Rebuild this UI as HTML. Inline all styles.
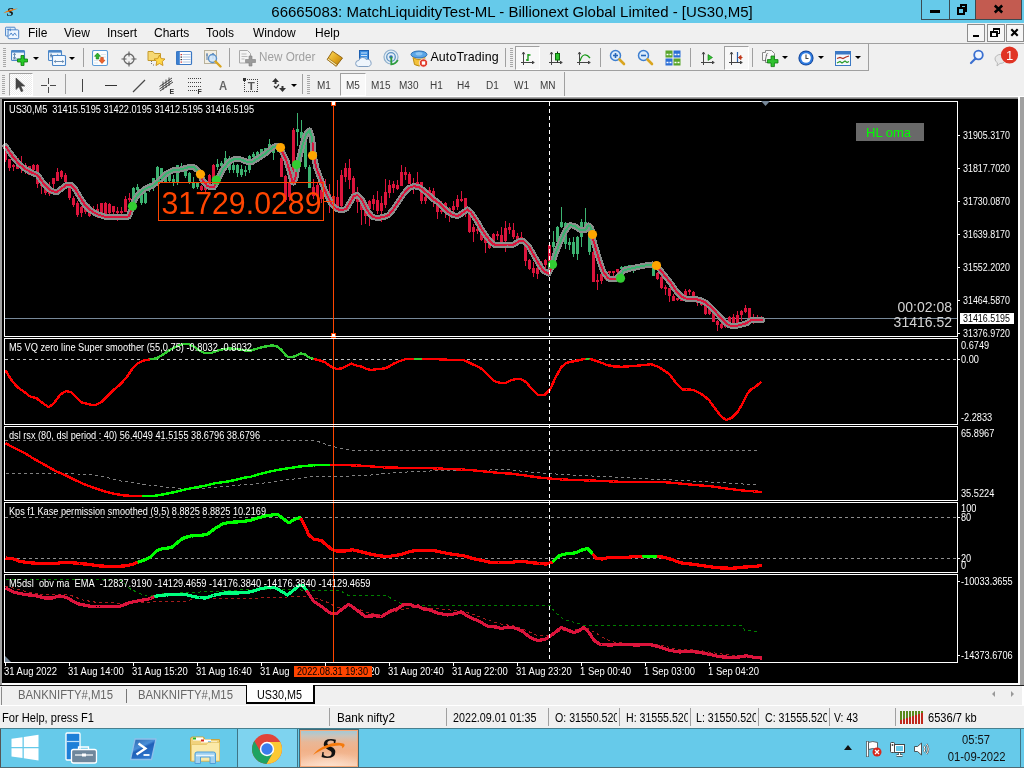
<!DOCTYPE html>
<html><head><meta charset="utf-8"><title>MT5</title><style>
html,body{margin:0;padding:0}
body{width:1024px;height:768px;overflow:hidden;position:relative;background:#f0f0f0;font-family:"Liberation Sans",sans-serif;font-size:12px;color:#000}
.abs{position:absolute}
div{box-sizing:border-box}
#title{left:0;top:0;width:1024px;height:23px;will-change:transform}
#ttext{left:0;top:2px;width:1024px;text-align:center;font-size:15px;line-height:19px;white-space:nowrap}
.wb{top:0;height:20px;border:1px solid #3a4a52;border-top:none}
#menu{left:0;top:23px;width:1024px;height:21px;border-bottom:1px solid #a0a0a0;will-change:transform}
.mi{top:3px;font-size:12px;line-height:15px;white-space:nowrap}
#tb1{left:0;top:44px;width:1024px;height:27px;will-change:transform}
#tb2{left:0;top:71px;width:1024px;height:26px;will-change:transform}
.sep{width:1px;background:#a0a0a0}
.grip{width:3px;background:repeating-linear-gradient(#a8a8a8 0,#a8a8a8 1px,transparent 1px,transparent 2px)}
.tf{top:8.500px;font-size:10px;line-height:12px;color:#3c3c3c;white-space:nowrap}
.pressed{border:1px solid #a0a0a0;border-right-color:#fff;border-bottom-color:#fff;background:#f8f8f8}
#mdi{left:2px;top:99px;width:1016px;height:585px;background:#000}
#tabs{left:0;top:685px;width:1024px;height:20px;border-top:1px solid #1c1c1c;will-change:transform}
.tab{top:0;font-size:12px;line-height:18px;color:#666;white-space:nowrap}
#status{left:0;top:706px;width:1024px;height:22px;will-change:transform}
.st{top:5px;font-size:12px;line-height:14px;white-space:nowrap}
.ssep{top:2px;width:1px;height:18px;background:#a0a0a0}
#task{left:0;top:728px;width:1024px;height:40px;border-top:1px solid #47808f;will-change:transform}
.tray{color:#111;font-size:12px;line-height:14px;white-space:nowrap;text-align:center}
</style></head><body>
<div class="abs" style="left:0;top:0;width:1024px;height:23px;background:#66caea"></div>
<div class="abs" style="left:0;top:728px;width:1024px;height:40px;background:#66caea"></div>
<div id="title" class="abs">
<div id="ttext" class="abs">66665083: MatchLiquidityTest-ML - Billionext Global Limited - [US30,M5]</div>
<svg class="abs" style="left:3px;top:5px" width="16" height="13" viewBox="0 0 16 13" ><text x="7.200" y="11" font-family="Liberation Serif, serif" font-style="italic" font-weight="bold" font-size="12.500" text-anchor="middle" fill="#111">S</text><path d="M0.300 8.200 C3.500 5.500 9 3.800 15 3.500 C10 5.800 5 7.200 0.300 8.200Z" fill="#f07810"/></svg>
<div class="abs wb" style="left:921px;width:29px"></div>
<div class="abs wb" style="left:949px;width:27px"></div>
<div class="abs wb" style="left:975px;width:47px;background:#c35b50"></div>
<div class="abs" style="left:930px;top:10px;width:10px;height:3px;background:#000"></div><svg class="abs" style="left:956px;top:3px" width="12" height="12" viewBox="0 0 12 12" shape-rendering="crispEdges"><path d="M4.500 4V2H10V8H8" fill="none" stroke="#000" stroke-width="2"/><rect x="2" y="5" width="6" height="5.500" fill="none" stroke="#000" stroke-width="2"/></svg><svg class="abs" style="left:993px;top:4px" width="11" height="10" viewBox="0 0 11 10" ><path d="M1.800 1.500L9.200 8.500M9.200 1.500L1.800 8.500" stroke="#000" stroke-width="2.500"/></svg>
</div>
<div id="menu" class="abs">
<div class="abs mi" style="left:28px">File</div>
<div class="abs mi" style="left:64px">View</div>
<div class="abs mi" style="left:107px">Insert</div>
<div class="abs mi" style="left:154px">Charts</div>
<div class="abs mi" style="left:206px">Tools</div>
<div class="abs mi" style="left:253px">Window</div>
<div class="abs mi" style="left:315px">Help</div>
<svg class="abs" style="left:5px;top:2px" width="15" height="15" viewBox="0 0 17 17" ><rect x="0.5" y="2.5" width="11" height="10" rx="1" fill="#dfeefb" stroke="#3a78c3"/><rect x="3.5" y="5.5" width="12" height="10" rx="1" fill="#eef6ff" stroke="#3a78c3"/><path d="M5 12l2-3 2 3 2-3 2 3" fill="none" stroke="#3a78c3" stroke-width="1"/><path d="M2 5h3M6 4v3" stroke="#3a78c3" stroke-width="1"/></svg>
<div class="abs" style="left:967px;top:0.500px;width:18px;height:18.500px;border:1px solid #8c8c8c;background:#f6f6f6"></div><div class="abs" style="left:986.5px;top:0.500px;width:18px;height:18.500px;border:1px solid #8c8c8c;background:#f6f6f6"></div><div class="abs" style="left:1005.5px;top:0.500px;width:18px;height:18.500px;border:1px solid #8c8c8c;background:#f6f6f6"></div><div class="abs" style="left:973px;top:12px;width:6px;height:2px;background:#000"></div><svg class="abs" style="left:990px;top:5px" width="11" height="10" viewBox="0 0 11 10" shape-rendering="crispEdges"><path d="M3.500 3V1H9.500V5.500H7.500" fill="none" stroke="#000" stroke-width="1.600"/><rect x="1" y="4" width="6" height="4.500" fill="none" stroke="#000" stroke-width="1.600"/></svg><svg class="abs" style="left:1010px;top:5px" width="9" height="9" viewBox="0 0 9 9" ><path d="M1.300 1.300L7.700 7.700M7.700 1.300L1.300 7.700" stroke="#000" stroke-width="2.100"/></svg>
</div>
<div id="tb1" class="abs">
<div class="abs grip" style="left:3px;top:4px;height:19px"></div><svg class="abs" style="left:10.5px;top:6px" width="18" height="17" viewBox="0 0 18 17" ><rect x="0.500" y="0.500" width="13" height="10" rx="1" fill="#eef5fc" stroke="#4a86c8" stroke-width="1.100"/><rect x="1" y="1" width="12" height="1.600" fill="#4a86c8"/><path d="M3.500 3.500v5M2.300 4.800l1.200-1.500 1.200 1.500M2.300 7.200l1.200 1.500 1.200-1.500M2 9h9" stroke="#5a7fa8" stroke-width="0.900" fill="none"/><path d="M9 6.500h3v-0h0v3.500h3.500v3h-3.500v3.500h-3v-3.500h-3.500v-3h3.500z" fill="#27c927" stroke="#0b7a0b" stroke-width="0.800" transform="translate(1,-1)"/></svg><div class="abs" style="left:33px;top:12.5px;width:0;height:0;border:3px solid transparent;border-top:3px solid #000;border-bottom:none"></div><svg class="abs" style="left:47.5px;top:6px" width="19" height="17" viewBox="0 0 19 17" ><rect x="0.500" y="0.500" width="13" height="10" rx="1" fill="#eef5fc" stroke="#4a86c8" stroke-width="1.100"/><rect x="1" y="1" width="12" height="1.600" fill="#4a86c8"/><path d="M2.500 5.500h8M3.700 4.300l-1.400 1.200 1.400 1.200M9.300 4.300l1.400 1.200-1.400 1.200M3 3.500v4" stroke="#5a7fa8" stroke-width="0.900" fill="none"/><rect x="4.500" y="5.500" width="13" height="10" rx="1" fill="#f4f9ff" stroke="#4a86c8" stroke-width="1.100"/><path d="M6.500 11.500h9M7.700 10.300l-1.400 1.200 1.400 1.200M14.300 10.300l1.400 1.200-1.400 1.200" stroke="#5a7fa8" stroke-width="0.900" fill="none"/></svg><div class="abs" style="left:69px;top:12.5px;width:0;height:0;border:3px solid transparent;border-top:3px solid #000;border-bottom:none"></div><div class="abs sep" style="left:83px;top:4px;height:19px"></div><svg class="abs" style="left:92px;top:6px" width="17" height="17" viewBox="0 0 17 17" ><rect x="0.500" y="0.500" width="15" height="15" rx="1.500" fill="#fdfefe" stroke="#5b9bd8" stroke-width="1.100"/><path d="M9 4.500h5M9 7h5M2 10.500h4M2 13h4" stroke="#dde6ee" stroke-width="1"/><path d="M5.500 3l3 3.300h-1.700v2.700h-2.600v-2.700h-1.700z" fill="#2fb52f" stroke="#0b7a0b" stroke-width="0.600"/><path d="M10 13.500l-3-3.300h1.700v-2.700h2.600v2.700h1.700z" fill="#f0642a" stroke="#b8380c" stroke-width="0.600"/></svg><svg class="abs" style="left:120.5px;top:6.5px" width="16" height="16" viewBox="0 0 16 16" ><circle cx="8" cy="8" r="5" fill="none" stroke="#6a6a6a" stroke-width="1.300"/><path d="M8 0.500v5M8 10.500v5M0.500 8h5M10.500 8h5" stroke="#5a5a5a" stroke-width="1.100"/></svg><svg class="abs" style="left:147px;top:4px" width="19" height="18" viewBox="0 0 19 18" ><path d="M1 3.5h5l1.5 2h6v7H1z" fill="#f6d873" stroke="#c49a2c"/><path d="M4.5 13v4M6 17h2" stroke="#777" stroke-width="1" stroke-dasharray="1,1"/><path d="M12.5 7l1.7 3.6 3.8.4-2.8 2.6.8 3.9-3.5-2-3.5 2 .8-3.9L7 11l3.8-.4z" fill="#ffd84a" stroke="#c8901a" stroke-width="0.9"/></svg><svg class="abs" style="left:176px;top:6px" width="17" height="16" viewBox="0 0 17 16" ><rect x="0.500" y="1.500" width="15" height="13" rx="1" fill="#fff" stroke="#3b78c4" stroke-width="1.200"/><rect x="1" y="2" width="2.800" height="12" fill="#3b7fd0"/><path d="M6.500 4.500h8M6.500 7h8M6.500 9.500h8M6.500 12h8" stroke="#9db8dc" stroke-width="0.800"/><rect x="4.600" y="4" width="1.300" height="1.200" fill="#d02020"/><rect x="4.600" y="6.500" width="1.300" height="1.200" fill="#222"/><rect x="4.600" y="9" width="1.300" height="1.200" fill="#222"/><rect x="4.600" y="11.500" width="1.300" height="1.200" fill="#d02020"/></svg><svg class="abs" style="left:204px;top:6px" width="18" height="18" viewBox="0 0 18 18" ><rect x="0.5" y="0.5" width="12" height="13" fill="#f3efe4" stroke="#b9b29b"/><path d="M3 3v7M2 5h2M9 3v6M8 4h2" stroke="#5a7fa8" stroke-width="1"/><circle cx="8.5" cy="8.5" r="4" fill="#cfe6fb" fill-opacity="0.85" stroke="#5b90c8" stroke-width="1.4"/><path d="M11.5 11.5l5 5" stroke="#d9a520" stroke-width="2.4" stroke-linecap="round"/></svg><div class="abs sep" style="left:229px;top:4px;height:19px"></div><svg class="abs" style="left:239px;top:6px" width="17" height="17" viewBox="0 0 17 17" ><path d="M0.5 0.5h8l3 3v9.5h-11z" fill="#f4f4f4" stroke="#aaa"/><path d="M2.5 4h5M2.5 6.5h6M2.5 9h3" stroke="#bbb"/><path d="M10 7h3v3.5h3.5v3h-3.5v3.5h-3v-3.5h-3.5v-3h3.5z" fill="#9b9b9b" stroke="#808080" stroke-width="0.6" transform="translate(0,-1)"/></svg><div class="abs" style="left:259px;top:6px;font-size:12px;line-height:15px;color:#a0a0a0;white-space:nowrap;transform-origin:0 0;transform:scaleX(0.974)">New Order</div><svg class="abs" style="left:326px;top:6px" width="18" height="18" viewBox="0 0 18 18" ><defs><linearGradient id="tg" x1="0" y1="0" x2="1" y2="1"><stop offset="0" stop-color="#ffe060"/><stop offset="0.55" stop-color="#e0a51e"/><stop offset="1" stop-color="#a87408"/></linearGradient></defs><path d="M1.200 9.500L6.500 1.200l10 6.800-6.300 8.200z" fill="url(#tg)" stroke="#8a5a08" stroke-width="0.900"/><path d="M1.200 9.500l9 6.700 1-1.500L2.500 8.300z" fill="#f7e7a8" stroke="#8a5a08" stroke-width="0.600"/></svg><svg class="abs" style="left:355px;top:6px" width="17" height="18" viewBox="0 0 17 18" ><rect x="4.5" y="0.5" width="9" height="11" fill="#3d8ee0" stroke="#1c5fb0"/><path d="M6 3h6M6 5.5h6M6 8h6" stroke="#cfe5fb" stroke-width="1"/><path d="M3.5 16.5a3 3 0 0 1 .3-6 4 4 0 0 1 7.4-1 3.5 3.5 0 0 1 2.3 7z" fill="#eef5fc" stroke="#7f9dc0" stroke-width="1"/></svg><svg class="abs" style="left:383px;top:5px" width="17" height="17" viewBox="0 0 17 17" ><circle cx="8" cy="8" r="7" fill="#e4eef6" stroke="#8fb0cc" stroke-width="1.2"/><circle cx="8" cy="8" r="4.3" fill="none" stroke="#5f93c2" stroke-width="1.3"/><circle cx="8" cy="8" r="1.8" fill="#2f6fb0"/><path d="M8.300 8v7.300A7.300 7.300 0 0 0 14.800 11" fill="none" stroke="#2e9e3a" stroke-width="1.800"/></svg><svg class="abs" style="left:410px;top:6px" width="19" height="18" viewBox="0 0 19 18" ><ellipse cx="9" cy="4.5" rx="8" ry="3.5" fill="#5aa5e6" stroke="#2a6fb5"/><path d="M3 7.5q6 4 12 0l-1.5 7q-4.5 3-9 0z" fill="#f3c23a" stroke="#b98a14"/><ellipse cx="9" cy="3.8" rx="3.5" ry="1.8" fill="#8fc6f2"/><circle cx="13.5" cy="13" r="4.2" fill="#e03a2a" stroke="#fff" stroke-width="0.8"/><rect x="11.8" y="11.3" width="3.4" height="3.4" fill="#fff"/></svg><div class="abs" style="left:430.5px;top:6px;font-size:12.4px;line-height:15px;white-space:nowrap;letter-spacing:0.1px">AutoTrading</div><div class="abs sep" style="left:505px;top:4px;height:19px"></div><div class="abs grip" style="left:510px;top:4px;height:19px"></div><div class="abs pressed" style="left:515px;top:2px;width:25px;height:24px"></div><svg class="abs" style="left:520px;top:7.2px" width="16" height="16" viewBox="0 0 16 16" ><path d="M3.500 1v13M1 11.500h13" stroke="#444" stroke-width="1" fill="none"/><path d="M2.200 3.300l1.300-2.300 1.300 2.300M12 10.200l2.300 1.300-2.300 1.300" fill="none" stroke="#444" stroke-width="1"/><path d="M8 3v7M6 9h2M8 4h2.5" stroke="#1a9a1a" stroke-width="1.4" fill="none"/></svg><svg class="abs" style="left:548px;top:7.2px" width="16" height="16" viewBox="0 0 16 16" ><path d="M3.500 1v13M1 11.500h13" stroke="#444" stroke-width="1" fill="none"/><path d="M2.200 3.300l1.300-2.300 1.300 2.300M12 10.200l2.300 1.300-2.300 1.300" fill="none" stroke="#444" stroke-width="1"/><path d="M9.5 0.5v11" stroke="#222"/><rect x="7.5" y="2.5" width="4" height="6.5" fill="#2fc12f" stroke="#0b6d0b"/></svg><svg class="abs" style="left:576px;top:7.2px" width="16" height="16" viewBox="0 0 16 16" ><path d="M3.500 1v13M1 11.500h13" stroke="#444" stroke-width="1" fill="none"/><path d="M2.200 3.300l1.300-2.300 1.300 2.300M12 10.200l2.300 1.300-2.300 1.300" fill="none" stroke="#444" stroke-width="1"/><path d="M4 10c2-7 6-8 10-3" fill="none" stroke="#1a9a1a" stroke-width="1.3"/></svg><div class="abs sep" style="left:600px;top:4px;height:19px"></div><svg class="abs" style="left:609px;top:5px" width="17" height="17" viewBox="0 0 17 17" ><circle cx="6.5" cy="6.5" r="5" fill="#dcecfb" stroke="#3e7fd0" stroke-width="1.5"/><path d="M10.5 10.5l4.5 4.5" stroke="#d9a520" stroke-width="2.6" stroke-linecap="round"/><path d="M4 6.5h5" stroke="#2566b8" stroke-width="1.6"/><path d="M6.5 4v5" stroke="#2566b8" stroke-width="1.6"/></svg><svg class="abs" style="left:637px;top:5px" width="17" height="17" viewBox="0 0 17 17" ><circle cx="6.5" cy="6.5" r="5" fill="#dcecfb" stroke="#3e7fd0" stroke-width="1.5"/><path d="M10.5 10.5l4.5 4.5" stroke="#d9a520" stroke-width="2.6" stroke-linecap="round"/><path d="M4 6.5h5" stroke="#2566b8" stroke-width="1.6"/></svg><svg class="abs" style="left:665px;top:6px" width="17" height="16" viewBox="0 0 17 16" ><rect x="0.5" y="0.5" width="7" height="7" fill="#59a52c"/><rect x="8.5" y="0.5" width="7" height="7" fill="#2d6fd6"/><rect x="0.5" y="8.5" width="7" height="7" fill="#2d6fd6"/><rect x="8.5" y="8.5" width="7" height="7" fill="#59a52c"/><path d="M1.5 4.5h5M9.5 4.5h5M1.5 12.5h5M9.5 12.5h5" stroke="#fff" stroke-width="1.6" stroke-dasharray="2,1"/></svg><div class="abs sep" style="left:690px;top:4px;height:19px"></div><svg class="abs" style="left:700px;top:7.2px" width="16" height="16" viewBox="0 0 16 16" ><path d="M3.500 1v13M1 11.500h13" stroke="#444" stroke-width="1" fill="none"/><path d="M2.200 3.300l1.300-2.300 1.300 2.300M12 10.200l2.300 1.300-2.300 1.300" fill="none" stroke="#444" stroke-width="1"/><path d="M8 3.5l4.5 3-4.5 3z" fill="#2fc12f" stroke="#0b7a0b" stroke-width="0.6"/></svg><div class="abs pressed" style="left:724px;top:2px;width:25px;height:24px"></div><svg class="abs" style="left:728px;top:7.2px" width="16" height="16" viewBox="0 0 16 16" ><path d="M3.500 1v13M1 11.500h13" stroke="#444" stroke-width="1" fill="none"/><path d="M2.200 3.300l1.300-2.300 1.300 2.300M12 10.200l2.300 1.300-2.300 1.300" fill="none" stroke="#444" stroke-width="1"/><path d="M9.5 1v10" stroke="#2b5fa8" stroke-width="1.2"/><path d="M14.5 6.5h-4m0 0l2.5-2v4z" stroke="#c0391b" fill="#c0391b" stroke-width="1"/></svg><div class="abs sep" style="left:752px;top:4px;height:19px"></div><svg class="abs" style="left:762px;top:6px" width="18" height="18" viewBox="0 0 18 18" ><path d="M0.5 2.5h3v-2h6l3 3v9h-9v-2h-3z" fill="#f7f7f7" stroke="#888"/><text x="3" y="9" font-size="8" font-style="italic" font-family="Liberation Serif" fill="#333">f</text><path d="M9 6h3.4v3.6H16v3.4h-3.6v3.6H9v-3.6H5.4V9.6H9z" fill="#2fc12f" stroke="#0b7a0b" stroke-width="0.8"/></svg><div class="abs" style="left:782px;top:12px;width:0;height:0;border:3px solid transparent;border-top:3px solid #000;border-bottom:none"></div><svg class="abs" style="left:798px;top:6px" width="17" height="17" viewBox="0 0 17 17" ><circle cx="8" cy="8" r="7.6" fill="#15479a"/><circle cx="8" cy="8" r="6.600" fill="#2f7be0"/><circle cx="8" cy="8" r="4.800" fill="#fff"/><path d="M8 4.500v4h2.500" fill="none" stroke="#444" stroke-width="1.1"/></svg><div class="abs" style="left:818px;top:12px;width:0;height:0;border:3px solid transparent;border-top:3px solid #000;border-bottom:none"></div><svg class="abs" style="left:835px;top:6.5px" width="17" height="16" viewBox="0 0 17 16" ><rect x="0.5" y="0.5" width="15" height="14" fill="#f5f9fd" stroke="#3b78c4"/><rect x="1" y="1" width="14" height="2.5" fill="#3b78c4"/><path d="M2 7.5l3-1 3 1 3-1.5 3-1" fill="none" stroke="#b03020" stroke-width="1.2"/><path d="M2 12l3-1.5 2 1.5 3-2 2 1.5 2-1" fill="none" stroke="#2a9a2a" stroke-width="1.2"/></svg><div class="abs" style="left:855px;top:12px;width:0;height:0;border:3px solid transparent;border-top:3px solid #000;border-bottom:none"></div><div class="abs" style="left:0;top:26px;width:869px;height:1px;background:#a0a0a0"></div><div class="abs" style="left:868px;top:0;width:1px;height:27px;background:#a0a0a0"></div><svg class="abs" style="left:969px;top:5px" width="16" height="16" viewBox="0 0 16 16" ><circle cx="9.5" cy="6" r="4.3" fill="#f0f6ff" stroke="#3a6fd0" stroke-width="1.8"/><path d="M6.5 9.5L2 14" stroke="#3a6fd0" stroke-width="2.2" stroke-linecap="round"/></svg><svg class="abs" style="left:993px;top:1px" width="28" height="24" viewBox="0 0 28 24" ><path d="M2 14a5.5 4.5 0 1 1 5 4.4L4 21l.5-3.2A4.5 4.5 0 0 1 2 14z" fill="#e8e8e8" stroke="#b8b8b8"/><circle cx="16.5" cy="10" r="8.6" fill="#e03424"/><text x="16.5" y="14.5" font-size="13" text-anchor="middle" fill="#fff" font-family="Liberation Sans">1</text></svg>
</div>
<div id="tb2" class="abs">
<div class="abs grip" style="left:2px;top:4px;height:19px"></div><div class="abs pressed" style="left:9px;top:2px;width:24px;height:23px;background:repeating-conic-gradient(#fff 0 25%,#ececec 0 50%) 0 0/2px 2px"></div><svg class="abs" style="left:15px;top:6px" width="10" height="16" viewBox="0 0 10 16" ><path d="M1 1v11.5l3-2.8 2.2 5 1.8-.8-2.2-4.8h4z" fill="#444" stroke="#444" stroke-width="0.6"/></svg><svg class="abs" style="left:41px;top:7px" width="15" height="15" viewBox="0 0 15 15" ><path d="M7.5 0v15M0 7.5h15" stroke="#4a4a4a" stroke-width="1" shape-rendering="crispEdges"/><rect x="6" y="6" width="3" height="3" fill="#f0f0f0"/></svg><div class="abs sep" style="left:65px;top:3px;height:20px"></div><div class="abs" style="left:82px;top:8px;width:1px;height:13px;background:#444"></div><div class="abs" style="left:105px;top:14px;width:12px;height:1px;background:#333"></div><svg class="abs" style="left:132px;top:7.5px" width="14" height="14" viewBox="0 0 14 14" ><path d="M1 13L13 1" stroke="#4a4a4a" stroke-width="1.200"/></svg><svg class="abs" style="left:158px;top:5px" width="18" height="18" viewBox="0 0 18 18" ><path d="M1.500 10.500L14 2M2 15L15 6M1.500 13L14 4.500" stroke="#444" stroke-width="1"/><path d="M5 5.500v8.500M8 3.500v8.500M11 1.500v8.500" stroke="#444" stroke-width="0.900"/><text x="11.500" y="17.500" font-size="7" font-weight="bold" fill="#333" font-family="Liberation Sans">E</text></svg><svg class="abs" style="left:187px;top:5px" width="18" height="18" viewBox="0 0 18 18" ><path d="M1 2.5h13M1 6.5h13M1 10.5h13M1 14.5h9" stroke="#444" stroke-width="1" stroke-dasharray="1,1" shape-rendering="crispEdges"/><text x="10.500" y="17.500" font-size="7" font-weight="bold" fill="#333" font-family="Liberation Sans">F</text></svg><div class="abs" style="left:218.500px;top:8.500px;font-size:12.500px;line-height:13px;color:#666;font-weight:bold;transform-origin:0 0;transform:scaleX(0.9)">A</div><svg class="abs" style="left:243px;top:6px" width="16" height="16" viewBox="0 0 16 16" ><rect x="1.5" y="2.5" width="13" height="12" fill="none" stroke="#444" stroke-dasharray="1,1" shape-rendering="crispEdges"/><rect x="0" y="1" width="3" height="3" fill="#333"/><text x="8.300" y="12.800" font-size="11.500" font-weight="bold" text-anchor="middle" fill="#555" font-family="Liberation Sans">T</text></svg><svg class="abs" style="left:271px;top:6px" width="16" height="16" viewBox="0 0 16 16" ><path d="M4.5 1l3.5 4h-2.5v2h-2v-2h-2.5z" fill="#333"/><path d="M11.5 15l-3.500-4h2.5v-2h2v2h2.5z" fill="#333"/><path d="M3 9l2 2 3-3.500" stroke="#333" fill="none" stroke-width="1.2"/></svg><div class="abs" style="left:291px;top:13px;width:0;height:0;border:3px solid transparent;border-top:3px solid #000;border-bottom:none"></div><div class="abs sep" style="left:302px;top:3px;height:20px"></div><div class="abs grip" style="left:307px;top:4px;height:19px"></div><div class="abs pressed" style="left:340px;top:2px;width:26px;height:23px"></div><div class="abs tf" style="left:317px">M1</div><div class="abs tf" style="left:346px">M5</div><div class="abs tf" style="left:371px">M15</div><div class="abs tf" style="left:399px">M30</div><div class="abs tf" style="left:430px">H1</div><div class="abs tf" style="left:457px">H4</div><div class="abs tf" style="left:486px">D1</div><div class="abs tf" style="left:514px">W1</div><div class="abs tf" style="left:540px">MN</div><div class="abs" style="left:564px;top:1px;width:1px;height:25px;background:#a0a0a0"></div>
</div>
<div class="abs" style="left:0;top:96px;width:1024px;height:1px;background:#fff"></div><div class="abs" style="left:0;top:97px;width:1024px;height:1px;background:#a8a8a8"></div><div class="abs" style="left:0;top:98px;width:1024px;height:1px;background:#7c7c7c"></div>
<div class="abs" style="left:0;top:99px;width:2px;height:586px;background:#a0a0a0"></div>
<div class="abs" style="left:1018px;top:97px;width:2px;height:588px;background:#fff"></div>
<div class="abs" style="left:1020px;top:97px;width:4px;height:588px;background:#a0a0a0"></div>
<div id="mdi" class="abs"></div>
<div class="abs" style="left:2px;top:683px;width:1018px;height:2px;background:#fff"></div>
<svg class="abs" width="1024" height="768" viewBox="0 0 1024 768" shape-rendering="crispEdges" font-family="Liberation Sans, sans-serif" style="left:0;top:0;will-change:transform">
<rect x="5" y="318" width="952" height="1" fill="#778899" />
<rect x="5" y="150" width="1" height="12" fill="#dc143c" />
<rect x="4" y="152" width="3" height="8" fill="#dc143c" />
<rect x="9" y="159" width="1" height="12" fill="#dc143c" />
<rect x="8" y="159" width="3" height="9" fill="#dc143c" />
<rect x="13" y="164" width="1" height="7" fill="#dc143c" />
<rect x="12" y="165" width="3" height="2" fill="#dc143c" />
<rect x="17" y="158" width="1" height="11" fill="#dc143c" />
<rect x="16" y="158" width="3" height="11" fill="#dc143c" />
<rect x="21" y="156" width="1" height="17" fill="#dc143c" />
<rect x="20" y="163" width="3" height="4" fill="#dc143c" />
<rect x="25" y="163" width="1" height="11" fill="#dc143c" />
<rect x="24" y="165" width="3" height="3" fill="#dc143c" />
<rect x="29" y="166" width="1" height="9" fill="#dc143c" />
<rect x="28" y="166" width="3" height="9" fill="#dc143c" />
<rect x="33" y="164" width="1" height="8" fill="#dc143c" />
<rect x="32" y="165" width="3" height="5" fill="#dc143c" />
<rect x="37" y="164" width="1" height="24" fill="#dc143c" />
<rect x="36" y="165" width="3" height="19" fill="#dc143c" />
<rect x="41" y="183" width="1" height="11" fill="#dc143c" />
<rect x="40" y="183" width="3" height="3" fill="#dc143c" />
<rect x="45" y="185" width="1" height="10" fill="#dc143c" />
<rect x="44" y="186" width="3" height="7" fill="#dc143c" />
<rect x="49" y="182" width="1" height="14" fill="#dc143c" />
<rect x="48" y="190" width="3" height="4" fill="#dc143c" />
<rect x="53" y="178" width="1" height="10" fill="#dc143c" />
<rect x="52" y="178" width="3" height="6" fill="#dc143c" />
<rect x="57" y="168" width="1" height="13" fill="#dc143c" />
<rect x="56" y="172" width="3" height="9" fill="#dc143c" />
<rect x="61" y="170" width="1" height="9" fill="#dc143c" />
<rect x="60" y="171" width="3" height="6" fill="#dc143c" />
<rect x="65" y="173" width="1" height="10" fill="#dc143c" />
<rect x="64" y="175" width="3" height="7" fill="#dc143c" />
<rect x="69" y="186" width="1" height="14" fill="#dc143c" />
<rect x="68" y="187" width="3" height="11" fill="#dc143c" />
<rect x="73" y="196" width="1" height="11" fill="#dc143c" />
<rect x="72" y="198" width="3" height="7" fill="#dc143c" />
<rect x="77" y="201" width="1" height="16" fill="#dc143c" />
<rect x="76" y="203" width="3" height="12" fill="#dc143c" />
<rect x="81" y="206" width="1" height="11" fill="#dc143c" />
<rect x="80" y="207" width="3" height="6" fill="#dc143c" />
<rect x="85" y="208" width="1" height="6" fill="#dc143c" />
<rect x="84" y="209" width="3" height="3" fill="#dc143c" />
<rect x="89" y="204" width="1" height="13" fill="#dc143c" />
<rect x="88" y="211" width="3" height="5" fill="#dc143c" />
<rect x="93" y="206" width="1" height="6" fill="#dc143c" />
<rect x="92" y="209" width="3" height="2" fill="#dc143c" />
<rect x="97" y="204" width="1" height="14" fill="#dc143c" />
<rect x="96" y="209" width="3" height="3" fill="#dc143c" />
<rect x="101" y="203" width="1" height="11" fill="#dc143c" />
<rect x="100" y="203" width="3" height="10" fill="#dc143c" />
<rect x="105" y="202" width="1" height="12" fill="#dc143c" />
<rect x="104" y="203" width="3" height="11" fill="#dc143c" />
<rect x="109" y="203" width="1" height="11" fill="#dc143c" />
<rect x="108" y="204" width="3" height="9" fill="#dc143c" />
<rect x="113" y="206" width="1" height="8" fill="#dc143c" />
<rect x="112" y="206" width="3" height="6" fill="#dc143c" />
<rect x="117" y="207" width="1" height="14" fill="#dc143c" />
<rect x="116" y="211" width="3" height="2" fill="#dc143c" />
<rect x="121" y="207" width="1" height="7" fill="#dc143c" />
<rect x="120" y="211" width="3" height="2" fill="#dc143c" />
<rect x="125" y="196" width="1" height="16" fill="#dc143c" />
<rect x="124" y="199" width="3" height="13" fill="#dc143c" />
<rect x="129" y="193" width="1" height="9" fill="#dc143c" />
<rect x="128" y="198" width="3" height="2" fill="#dc143c" />
<rect x="133" y="187" width="1" height="12" fill="#3cb371" />
<rect x="132" y="188" width="3" height="10" fill="#3cb371" />
<rect x="137" y="184" width="1" height="9" fill="#3cb371" />
<rect x="136" y="187" width="3" height="3" fill="#3cb371" />
<rect x="141" y="191" width="1" height="14" fill="#3cb371" />
<rect x="140" y="192" width="3" height="11" fill="#3cb371" />
<rect x="145" y="186" width="1" height="18" fill="#3cb371" />
<rect x="144" y="193" width="3" height="10" fill="#3cb371" />
<rect x="149" y="183" width="1" height="9" fill="#3cb371" />
<rect x="148" y="185" width="3" height="4" fill="#3cb371" />
<rect x="153" y="178" width="1" height="13" fill="#3cb371" />
<rect x="152" y="178" width="3" height="7" fill="#3cb371" />
<rect x="157" y="166" width="1" height="13" fill="#3cb371" />
<rect x="156" y="167" width="3" height="12" fill="#3cb371" />
<rect x="161" y="168" width="1" height="11" fill="#3cb371" />
<rect x="160" y="168" width="3" height="10" fill="#3cb371" />
<rect x="165" y="171" width="1" height="12" fill="#3cb371" />
<rect x="164" y="172" width="3" height="10" fill="#3cb371" />
<rect x="169" y="173" width="1" height="10" fill="#3cb371" />
<rect x="168" y="174" width="3" height="7" fill="#3cb371" />
<rect x="173" y="175" width="1" height="11" fill="#3cb371" />
<rect x="172" y="179" width="3" height="3" fill="#3cb371" />
<rect x="177" y="165" width="1" height="20" fill="#3cb371" />
<rect x="176" y="165" width="3" height="17" fill="#3cb371" />
<rect x="181" y="163" width="1" height="5" fill="#3cb371" />
<rect x="180" y="166" width="3" height="2" fill="#3cb371" />
<rect x="185" y="170" width="1" height="8" fill="#3cb371" />
<rect x="184" y="171" width="3" height="5" fill="#3cb371" />
<rect x="189" y="172" width="1" height="12" fill="#3cb371" />
<rect x="188" y="173" width="3" height="9" fill="#3cb371" />
<rect x="193" y="177" width="1" height="12" fill="#3cb371" />
<rect x="192" y="183" width="3" height="5" fill="#3cb371" />
<rect x="197" y="182" width="1" height="7" fill="#3cb371" />
<rect x="196" y="183" width="3" height="4" fill="#3cb371" />
<rect x="201" y="185" width="1" height="6" fill="#dc143c" />
<rect x="200" y="186" width="3" height="4" fill="#dc143c" />
<rect x="205" y="181" width="1" height="11" fill="#dc143c" />
<rect x="204" y="183" width="3" height="7" fill="#dc143c" />
<rect x="209" y="174" width="1" height="12" fill="#dc143c" />
<rect x="208" y="175" width="3" height="10" fill="#dc143c" />
<rect x="213" y="164" width="1" height="15" fill="#dc143c" />
<rect x="212" y="165" width="3" height="13" fill="#dc143c" />
<rect x="217" y="159" width="1" height="11" fill="#3cb371" />
<rect x="216" y="164" width="3" height="3" fill="#3cb371" />
<rect x="221" y="161" width="1" height="7" fill="#3cb371" />
<rect x="220" y="163" width="3" height="3" fill="#3cb371" />
<rect x="225" y="151" width="1" height="12" fill="#3cb371" />
<rect x="224" y="158" width="3" height="5" fill="#3cb371" />
<rect x="229" y="156" width="1" height="17" fill="#3cb371" />
<rect x="228" y="158" width="3" height="12" fill="#3cb371" />
<rect x="233" y="162" width="1" height="11" fill="#3cb371" />
<rect x="232" y="165" width="3" height="5" fill="#3cb371" />
<rect x="237" y="164" width="1" height="13" fill="#3cb371" />
<rect x="236" y="165" width="3" height="8" fill="#3cb371" />
<rect x="241" y="165" width="1" height="12" fill="#3cb371" />
<rect x="240" y="169" width="3" height="6" fill="#3cb371" />
<rect x="245" y="166" width="1" height="10" fill="#3cb371" />
<rect x="244" y="170" width="3" height="2" fill="#3cb371" />
<rect x="249" y="155" width="1" height="18" fill="#3cb371" />
<rect x="248" y="156" width="3" height="14" fill="#3cb371" />
<rect x="253" y="152" width="1" height="6" fill="#3cb371" />
<rect x="252" y="154" width="3" height="3" fill="#3cb371" />
<rect x="257" y="151" width="1" height="6" fill="#3cb371" />
<rect x="256" y="152" width="3" height="4" fill="#3cb371" />
<rect x="261" y="149" width="1" height="5" fill="#3cb371" />
<rect x="260" y="149" width="3" height="4" fill="#3cb371" />
<rect x="265" y="148" width="1" height="3" fill="#3cb371" />
<rect x="264" y="148" width="3" height="2" fill="#3cb371" />
<rect x="269" y="139" width="1" height="8" fill="#3cb371" />
<rect x="268" y="144" width="3" height="3" fill="#3cb371" />
<rect x="273" y="147" width="1" height="13" fill="#3cb371" />
<rect x="272" y="147" width="3" height="6" fill="#3cb371" />
<rect x="277" y="145" width="1" height="7" fill="#3cb371" />
<rect x="276" y="146" width="3" height="4" fill="#3cb371" />
<rect x="281" y="157" width="1" height="20" fill="#dc143c" />
<rect x="280" y="158" width="3" height="19" fill="#dc143c" />
<rect x="285" y="175" width="1" height="27" fill="#dc143c" />
<rect x="284" y="176" width="3" height="24" fill="#dc143c" />
<rect x="289" y="180" width="1" height="21" fill="#dc143c" />
<rect x="288" y="183" width="3" height="14" fill="#dc143c" />
<rect x="293" y="128" width="1" height="50" fill="#dc143c" />
<rect x="292" y="130" width="3" height="45" fill="#dc143c" />
<rect x="297" y="113" width="1" height="33" fill="#3cb371" />
<rect x="296" y="129" width="3" height="3" fill="#3cb371" />
<rect x="301" y="120" width="1" height="20" fill="#3cb371" />
<rect x="300" y="132" width="3" height="6" fill="#3cb371" />
<rect x="305" y="137" width="1" height="32" fill="#3cb371" />
<rect x="304" y="138" width="3" height="29" fill="#3cb371" />
<rect x="309" y="165" width="1" height="23" fill="#3cb371" />
<rect x="308" y="167" width="3" height="21" fill="#3cb371" />
<rect x="313" y="179" width="1" height="20" fill="#dc143c" />
<rect x="312" y="187" width="3" height="9" fill="#dc143c" />
<rect x="317" y="183" width="1" height="17" fill="#dc143c" />
<rect x="316" y="185" width="3" height="11" fill="#dc143c" />
<rect x="321" y="179" width="1" height="24" fill="#dc143c" />
<rect x="320" y="190" width="3" height="9" fill="#dc143c" />
<rect x="325" y="179" width="1" height="17" fill="#dc143c" />
<rect x="324" y="187" width="3" height="6" fill="#dc143c" />
<rect x="329" y="184" width="1" height="29" fill="#dc143c" />
<rect x="328" y="194" width="3" height="6" fill="#dc143c" />
<rect x="333" y="196" width="1" height="13" fill="#dc143c" />
<rect x="332" y="196" width="3" height="13" fill="#dc143c" />
<rect x="337" y="180" width="1" height="28" fill="#dc143c" />
<rect x="336" y="197" width="3" height="10" fill="#dc143c" />
<rect x="341" y="170" width="1" height="38" fill="#dc143c" />
<rect x="340" y="175" width="3" height="31" fill="#dc143c" />
<rect x="345" y="163" width="1" height="19" fill="#dc143c" />
<rect x="344" y="168" width="3" height="9" fill="#dc143c" />
<rect x="349" y="159" width="1" height="30" fill="#dc143c" />
<rect x="348" y="168" width="3" height="12" fill="#dc143c" />
<rect x="353" y="176" width="1" height="20" fill="#dc143c" />
<rect x="352" y="178" width="3" height="18" fill="#dc143c" />
<rect x="357" y="187" width="1" height="26" fill="#dc143c" />
<rect x="356" y="199" width="3" height="3" fill="#dc143c" />
<rect x="361" y="201" width="1" height="24" fill="#dc143c" />
<rect x="360" y="202" width="3" height="8" fill="#dc143c" />
<rect x="365" y="209" width="1" height="15" fill="#dc143c" />
<rect x="364" y="210" width="3" height="6" fill="#dc143c" />
<rect x="369" y="200" width="1" height="26" fill="#dc143c" />
<rect x="368" y="201" width="3" height="8" fill="#dc143c" />
<rect x="373" y="195" width="1" height="15" fill="#dc143c" />
<rect x="372" y="199" width="3" height="5" fill="#dc143c" />
<rect x="377" y="191" width="1" height="23" fill="#dc143c" />
<rect x="376" y="200" width="3" height="11" fill="#dc143c" />
<rect x="381" y="196" width="1" height="26" fill="#dc143c" />
<rect x="380" y="203" width="3" height="8" fill="#dc143c" />
<rect x="385" y="179" width="1" height="29" fill="#dc143c" />
<rect x="384" y="192" width="3" height="13" fill="#dc143c" />
<rect x="389" y="180" width="1" height="18" fill="#dc143c" />
<rect x="388" y="185" width="3" height="8" fill="#dc143c" />
<rect x="393" y="181" width="1" height="12" fill="#dc143c" />
<rect x="392" y="184" width="3" height="4" fill="#dc143c" />
<rect x="397" y="180" width="1" height="10" fill="#dc143c" />
<rect x="396" y="185" width="3" height="4" fill="#dc143c" />
<rect x="401" y="165" width="1" height="21" fill="#dc143c" />
<rect x="400" y="172" width="3" height="14" fill="#dc143c" />
<rect x="405" y="167" width="1" height="13" fill="#dc143c" />
<rect x="404" y="172" width="3" height="3" fill="#dc143c" />
<rect x="409" y="172" width="1" height="12" fill="#dc143c" />
<rect x="408" y="174" width="3" height="10" fill="#dc143c" />
<rect x="413" y="178" width="1" height="16" fill="#dc143c" />
<rect x="412" y="183" width="3" height="2" fill="#dc143c" />
<rect x="417" y="172" width="1" height="13" fill="#dc143c" />
<rect x="416" y="182" width="3" height="3" fill="#dc143c" />
<rect x="421" y="182" width="1" height="22" fill="#dc143c" />
<rect x="420" y="182" width="3" height="19" fill="#dc143c" />
<rect x="425" y="196" width="1" height="8" fill="#dc143c" />
<rect x="424" y="197" width="3" height="4" fill="#dc143c" />
<rect x="429" y="187" width="1" height="8" fill="#dc143c" />
<rect x="428" y="190" width="3" height="4" fill="#dc143c" />
<rect x="433" y="188" width="1" height="19" fill="#dc143c" />
<rect x="432" y="191" width="3" height="6" fill="#dc143c" />
<rect x="437" y="203" width="1" height="16" fill="#dc143c" />
<rect x="436" y="204" width="3" height="8" fill="#dc143c" />
<rect x="441" y="201" width="1" height="13" fill="#dc143c" />
<rect x="440" y="210" width="3" height="2" fill="#dc143c" />
<rect x="445" y="202" width="1" height="16" fill="#dc143c" />
<rect x="444" y="203" width="3" height="5" fill="#dc143c" />
<rect x="449" y="207" width="1" height="15" fill="#dc143c" />
<rect x="448" y="208" width="3" height="5" fill="#dc143c" />
<rect x="453" y="201" width="1" height="11" fill="#dc143c" />
<rect x="452" y="206" width="3" height="4" fill="#dc143c" />
<rect x="457" y="195" width="1" height="15" fill="#dc143c" />
<rect x="456" y="199" width="3" height="8" fill="#dc143c" />
<rect x="461" y="191" width="1" height="11" fill="#dc143c" />
<rect x="460" y="199" width="3" height="2" fill="#dc143c" />
<rect x="465" y="198" width="1" height="19" fill="#dc143c" />
<rect x="464" y="198" width="3" height="10" fill="#dc143c" />
<rect x="469" y="213" width="1" height="20" fill="#dc143c" />
<rect x="468" y="214" width="3" height="18" fill="#dc143c" />
<rect x="473" y="224" width="1" height="18" fill="#dc143c" />
<rect x="472" y="227" width="3" height="5" fill="#dc143c" />
<rect x="477" y="228" width="1" height="6" fill="#dc143c" />
<rect x="476" y="229" width="3" height="2" fill="#dc143c" />
<rect x="481" y="232" width="1" height="9" fill="#dc143c" />
<rect x="480" y="233" width="3" height="7" fill="#dc143c" />
<rect x="485" y="238" width="1" height="15" fill="#dc143c" />
<rect x="484" y="239" width="3" height="4" fill="#dc143c" />
<rect x="489" y="241" width="1" height="8" fill="#dc143c" />
<rect x="488" y="242" width="3" height="6" fill="#dc143c" />
<rect x="493" y="233" width="1" height="9" fill="#dc143c" />
<rect x="492" y="234" width="3" height="7" fill="#dc143c" />
<rect x="497" y="231" width="1" height="9" fill="#dc143c" />
<rect x="496" y="234" width="3" height="2" fill="#dc143c" />
<rect x="501" y="227" width="1" height="16" fill="#dc143c" />
<rect x="500" y="235" width="3" height="7" fill="#dc143c" />
<rect x="505" y="221" width="1" height="31" fill="#dc143c" />
<rect x="504" y="228" width="3" height="13" fill="#dc143c" />
<rect x="509" y="223" width="1" height="11" fill="#dc143c" />
<rect x="508" y="227" width="3" height="3" fill="#dc143c" />
<rect x="513" y="223" width="1" height="16" fill="#dc143c" />
<rect x="512" y="230" width="3" height="7" fill="#dc143c" />
<rect x="517" y="233" width="1" height="13" fill="#dc143c" />
<rect x="516" y="236" width="3" height="3" fill="#dc143c" />
<rect x="521" y="232" width="1" height="7" fill="#dc143c" />
<rect x="520" y="237" width="3" height="2" fill="#dc143c" />
<rect x="525" y="245" width="1" height="21" fill="#dc143c" />
<rect x="524" y="246" width="3" height="15" fill="#dc143c" />
<rect x="529" y="259" width="1" height="11" fill="#dc143c" />
<rect x="528" y="260" width="3" height="9" fill="#dc143c" />
<rect x="533" y="262" width="1" height="15" fill="#dc143c" />
<rect x="532" y="268" width="3" height="5" fill="#dc143c" />
<rect x="537" y="266" width="1" height="13" fill="#dc143c" />
<rect x="536" y="268" width="3" height="6" fill="#dc143c" />
<rect x="541" y="261" width="1" height="9" fill="#dc143c" />
<rect x="540" y="263" width="3" height="5" fill="#dc143c" />
<rect x="545" y="259" width="1" height="10" fill="#dc143c" />
<rect x="544" y="260" width="3" height="5" fill="#dc143c" />
<rect x="549" y="244" width="1" height="18" fill="#dc143c" />
<rect x="548" y="245" width="3" height="16" fill="#dc143c" />
<rect x="553" y="231" width="1" height="21" fill="#3cb371" />
<rect x="552" y="242" width="3" height="5" fill="#3cb371" />
<rect x="557" y="226" width="1" height="18" fill="#3cb371" />
<rect x="556" y="227" width="3" height="15" fill="#3cb371" />
<rect x="561" y="207" width="1" height="21" fill="#3cb371" />
<rect x="560" y="222" width="3" height="5" fill="#3cb371" />
<rect x="565" y="222" width="1" height="27" fill="#3cb371" />
<rect x="564" y="223" width="3" height="21" fill="#3cb371" />
<rect x="569" y="238" width="1" height="12" fill="#3cb371" />
<rect x="568" y="242" width="3" height="3" fill="#3cb371" />
<rect x="573" y="237" width="1" height="20" fill="#3cb371" />
<rect x="572" y="242" width="3" height="12" fill="#3cb371" />
<rect x="577" y="236" width="1" height="24" fill="#3cb371" />
<rect x="576" y="237" width="3" height="17" fill="#3cb371" />
<rect x="581" y="219" width="1" height="28" fill="#3cb371" />
<rect x="580" y="222" width="3" height="15" fill="#3cb371" />
<rect x="585" y="208" width="1" height="20" fill="#3cb371" />
<rect x="584" y="222" width="3" height="4" fill="#3cb371" />
<rect x="589" y="227" width="1" height="28" fill="#3cb371" />
<rect x="588" y="228" width="3" height="24" fill="#3cb371" />
<rect x="593" y="251" width="1" height="31" fill="#dc143c" />
<rect x="592" y="252" width="3" height="30" fill="#dc143c" />
<rect x="597" y="274" width="1" height="16" fill="#dc143c" />
<rect x="596" y="280" width="3" height="2" fill="#dc143c" />
<rect x="601" y="273" width="1" height="11" fill="#dc143c" />
<rect x="600" y="274" width="3" height="7" fill="#dc143c" />
<rect x="605" y="275" width="1" height="5" fill="#dc143c" />
<rect x="604" y="276" width="3" height="3" fill="#dc143c" />
<rect x="609" y="271" width="1" height="4" fill="#dc143c" />
<rect x="608" y="271" width="3" height="2" fill="#dc143c" />
<rect x="613" y="271" width="1" height="5" fill="#dc143c" />
<rect x="612" y="271" width="3" height="2" fill="#dc143c" />
<rect x="617" y="269" width="1" height="4" fill="#dc143c" />
<rect x="616" y="269" width="3" height="3" fill="#dc143c" />
<rect x="621" y="266" width="1" height="4" fill="#3cb371" />
<rect x="620" y="267" width="3" height="2" fill="#3cb371" />
<rect x="625" y="266" width="1" height="2" fill="#3cb371" />
<rect x="624" y="266" width="3" height="2" fill="#3cb371" />
<rect x="629" y="265" width="1" height="2" fill="#3cb371" />
<rect x="628" y="265" width="3" height="2" fill="#3cb371" />
<rect x="633" y="266" width="1" height="7" fill="#3cb371" />
<rect x="632" y="266" width="3" height="2" fill="#3cb371" />
<rect x="637" y="265" width="1" height="2" fill="#3cb371" />
<rect x="636" y="265" width="3" height="2" fill="#3cb371" />
<rect x="641" y="264" width="1" height="2" fill="#3cb371" />
<rect x="640" y="264" width="3" height="2" fill="#3cb371" />
<rect x="645" y="264" width="1" height="2" fill="#3cb371" />
<rect x="644" y="264" width="3" height="2" fill="#3cb371" />
<rect x="649" y="263" width="1" height="2" fill="#3cb371" />
<rect x="648" y="263" width="3" height="2" fill="#3cb371" />
<rect x="653" y="264" width="1" height="12" fill="#3cb371" />
<rect x="652" y="264" width="3" height="12" fill="#3cb371" />
<rect x="657" y="272" width="1" height="8" fill="#dc143c" />
<rect x="656" y="273" width="3" height="6" fill="#dc143c" />
<rect x="661" y="276" width="1" height="13" fill="#dc143c" />
<rect x="660" y="277" width="3" height="11" fill="#dc143c" />
<rect x="665" y="285" width="1" height="10" fill="#dc143c" />
<rect x="664" y="287" width="3" height="2" fill="#dc143c" />
<rect x="669" y="288" width="1" height="14" fill="#dc143c" />
<rect x="668" y="288" width="3" height="8" fill="#dc143c" />
<rect x="673" y="294" width="1" height="7" fill="#dc143c" />
<rect x="672" y="296" width="3" height="5" fill="#dc143c" />
<rect x="677" y="298" width="1" height="3" fill="#dc143c" />
<rect x="676" y="298" width="3" height="2" fill="#dc143c" />
<rect x="681" y="299" width="1" height="2" fill="#dc143c" />
<rect x="680" y="299" width="3" height="2" fill="#dc143c" />
<rect x="685" y="289" width="1" height="7" fill="#dc143c" />
<rect x="684" y="291" width="3" height="5" fill="#dc143c" />
<rect x="689" y="289" width="1" height="6" fill="#dc143c" />
<rect x="688" y="290" width="3" height="2" fill="#dc143c" />
<rect x="693" y="291" width="1" height="5" fill="#dc143c" />
<rect x="692" y="292" width="3" height="4" fill="#dc143c" />
<rect x="697" y="299" width="1" height="7" fill="#dc143c" />
<rect x="696" y="300" width="3" height="3" fill="#dc143c" />
<rect x="701" y="302" width="1" height="4" fill="#dc143c" />
<rect x="700" y="303" width="3" height="2" fill="#dc143c" />
<rect x="705" y="304" width="1" height="11" fill="#dc143c" />
<rect x="704" y="305" width="3" height="9" fill="#dc143c" />
<rect x="709" y="308" width="1" height="7" fill="#dc143c" />
<rect x="708" y="309" width="3" height="5" fill="#dc143c" />
<rect x="713" y="312" width="1" height="10" fill="#dc143c" />
<rect x="712" y="313" width="3" height="9" fill="#dc143c" />
<rect x="717" y="320" width="1" height="11" fill="#dc143c" />
<rect x="716" y="321" width="3" height="4" fill="#dc143c" />
<rect x="721" y="322" width="1" height="7" fill="#dc143c" />
<rect x="720" y="324" width="3" height="4" fill="#dc143c" />
<rect x="725" y="323" width="1" height="5" fill="#dc143c" />
<rect x="724" y="324" width="3" height="3" fill="#dc143c" />
<rect x="729" y="316" width="1" height="7" fill="#dc143c" />
<rect x="728" y="317" width="3" height="6" fill="#dc143c" />
<rect x="733" y="314" width="1" height="10" fill="#dc143c" />
<rect x="732" y="317" width="3" height="7" fill="#dc143c" />
<rect x="737" y="311" width="1" height="13" fill="#dc143c" />
<rect x="736" y="315" width="3" height="9" fill="#dc143c" />
<rect x="741" y="310" width="1" height="11" fill="#dc143c" />
<rect x="740" y="311" width="3" height="4" fill="#dc143c" />
<rect x="745" y="305" width="1" height="8" fill="#dc143c" />
<rect x="744" y="308" width="3" height="4" fill="#dc143c" />
<rect x="749" y="308" width="1" height="10" fill="#dc143c" />
<rect x="748" y="308" width="3" height="10" fill="#dc143c" />
<rect x="753" y="314" width="1" height="10" fill="#dc143c" />
<rect x="752" y="317" width="3" height="2" fill="#dc143c" />
<rect x="757" y="315" width="1" height="3" fill="#dc143c" />
<rect x="756" y="317" width="3" height="1" fill="#dc143c" />
<rect x="761" y="316" width="1" height="2" fill="#dc143c" />
<rect x="760" y="317" width="3" height="1" fill="#dc143c" />
<polyline points="5.5,146.2 6.5,147.7 7.5,149.1 8.5,150.5 9.5,152.0 10.5,153.4 11.5,154.8 12.5,156.2 13.5,157.4 14.5,158.7 15.5,159.8 16.5,161.1 17.5,162.2 18.5,163.4 19.5,164.3 20.5,165.2 21.5,165.9 22.5,166.8 23.5,167.6 24.5,168.3 25.5,169.1 26.5,169.7 27.5,170.2 28.5,170.8 29.5,171.4 30.5,172.1 31.5,172.6 32.5,173.0 33.5,173.4 34.5,173.8 35.5,174.2 36.5,174.6 37.5,175.0 38.5,176.4 39.5,177.8 40.5,179.2 41.5,180.6 42.5,182.0 43.5,183.4 44.5,184.5 45.5,185.5 46.5,186.5 47.5,187.5 48.5,188.5 49.5,189.5 50.5,190.2 51.5,190.6 52.5,191.0 53.5,191.4 54.5,191.8 55.5,192.2 56.5,192.3 57.5,191.6 58.5,190.8 59.5,190.1 60.5,189.3 61.5,188.6 62.5,187.8 63.5,187.1 64.5,186.3 65.5,185.6 66.5,185.0 67.5,185.0 68.5,185.0 69.5,185.0 70.5,185.0 71.5,185.2 72.5,186.2 73.5,187.2 74.5,188.2 75.5,189.6 76.5,191.4 77.5,193.1 78.5,194.9 79.5,196.6 80.5,198.2 81.5,199.8 82.5,201.2 83.5,202.8 84.5,204.2 85.5,205.5 86.5,206.5 87.5,207.5 88.5,208.5 89.5,209.5 90.5,210.3 91.5,210.9 92.5,211.5 93.5,212.1 94.5,212.7 95.5,213.3 96.5,213.8 97.5,214.2 98.5,214.6 99.5,214.9 100.5,215.3 101.5,215.6 102.5,216.0 103.5,216.3 104.5,216.6 105.5,216.9 106.5,217.0 107.5,217.0 108.5,217.0 109.5,217.0 110.5,217.0 111.5,217.0 112.5,217.0 113.5,217.0 114.5,217.0 115.5,217.0 116.5,217.0 117.5,217.0 118.5,217.0 119.5,217.0 120.5,217.0 121.5,216.9 122.5,216.9 123.5,216.8 124.5,216.7 125.5,216.7 126.5,216.6 127.5,216.6 128.5,216.5 129.5,214.6 130.5,211.9 131.5,209.1 132.5,205.6 133.5,202.1 134.5,200.1 135.5,198.6 136.5,197.1 137.5,195.6 138.5,194.1 139.5,193.2 140.5,192.3 141.5,191.6 142.5,190.8 143.5,189.9 144.5,189.2 145.5,188.6 146.5,188.2 147.5,187.8 148.5,187.3 149.5,186.9 150.5,186.6 151.5,186.2 152.5,185.8 153.5,185.0 154.5,184.2 155.5,183.4 156.5,182.7 157.5,181.9 158.5,181.2 159.5,180.4 160.5,179.5 161.5,178.5 162.5,177.5 163.5,176.5 164.5,175.5 165.5,174.5 166.5,173.6 167.5,173.1 168.5,172.6 169.5,172.1 170.5,171.5 171.5,171.0 172.5,170.5 173.5,170.4 174.5,170.2 175.5,170.1 176.5,170.0 177.5,169.8 178.5,169.7 179.5,169.6 180.5,169.4 181.5,169.1 182.5,168.8 183.5,168.6 184.5,168.3 185.5,168.0 186.5,167.8 187.5,167.5 188.5,167.4 189.5,167.3 190.5,167.3 191.5,167.2 192.5,167.1 193.5,167.0 194.5,167.6 195.5,168.5 196.5,169.3 197.5,170.2 198.5,171.0 199.5,173.0 200.5,175.3 201.5,177.7 202.5,180.0 203.5,181.2 204.5,182.5 205.5,183.8 206.5,185.0 207.5,186.2 208.5,186.4 209.5,186.7 210.5,186.8 211.5,187.1 212.5,187.2 213.5,187.4 214.5,186.0 215.5,184.0 216.5,182.0 217.5,180.0 218.5,178.0 219.5,176.0 220.5,174.0 221.5,172.0 222.5,170.0 223.5,168.7 224.5,167.4 225.5,166.2 226.5,164.9 227.5,163.6 228.5,162.3 229.5,161.6 230.5,161.1 231.5,160.6 232.5,160.1 233.5,159.5 234.5,159.0 235.5,158.8 236.5,158.9 237.5,159.1 238.5,159.2 239.5,159.3 240.5,159.4 241.5,159.6 242.5,160.1 243.5,160.6 244.5,161.0 245.5,161.3 246.5,161.6 247.5,161.8 248.5,161.9 249.5,162.2 250.5,162.3 251.5,162.3 252.5,161.8 253.5,161.2 254.5,160.6 255.5,159.9 256.5,159.3 257.5,158.8 258.5,158.1 259.5,157.4 260.5,156.8 261.5,156.1 262.5,155.4 263.5,154.8 264.5,154.1 265.5,153.3 266.5,152.5 267.5,151.7 268.5,150.8 269.5,150.0 270.5,149.2 271.5,148.3 272.5,147.5 273.5,147.1 274.5,146.6 275.5,146.2 276.5,145.7 277.5,146.0 278.5,147.1 279.5,148.1 280.5,149.2 281.5,150.5 282.5,152.5 283.5,154.5 284.5,156.5 285.5,158.5 286.5,160.8 287.5,164.2 288.5,167.5 289.5,170.8 290.5,174.4 291.5,178.1 292.5,181.9 293.5,182.5 294.5,180.0 295.5,177.5 296.5,172.1 297.5,166.7 298.5,161.3 299.5,157.0 300.5,153.0 301.5,149.0 302.5,145.0 303.5,142.0 304.5,139.0 305.5,136.0 306.5,133.5 307.5,132.5 308.5,131.5 309.5,130.5 310.5,133.3 311.5,136.1 312.5,142.5 313.5,152.5 314.5,158.8 315.5,163.8 316.5,168.2 317.5,170.8 318.5,173.5 319.5,176.2 320.5,178.8 321.5,181.5 322.5,184.2 323.5,186.8 324.5,189.2 325.5,191.6 326.5,193.9 327.5,196.2 328.5,198.2 329.5,200.2 330.5,202.2 331.5,204.0 332.5,205.0 333.5,206.0 334.5,207.0 335.5,208.0 336.5,208.8 337.5,209.2 338.5,209.5 339.5,209.9 340.5,210.2 341.5,210.4 342.5,210.1 343.5,209.7 344.5,209.4 345.5,209.0 346.5,208.3 347.5,206.7 348.5,205.0 349.5,203.3 350.5,201.7 351.5,200.0 352.5,198.3 353.5,196.7 354.5,196.0 355.5,195.7 356.5,195.3 357.5,195.0 358.5,196.0 359.5,197.0 360.5,198.0 361.5,199.2 362.5,201.2 363.5,203.2 364.5,205.2 365.5,207.1 366.5,208.8 367.5,210.4 368.5,212.1 369.5,213.4 370.5,214.6 371.5,215.8 372.5,217.0 373.5,217.2 374.5,217.4 375.5,217.6 376.5,217.8 377.5,218.0 378.5,217.8 379.5,217.7 380.5,217.5 381.5,217.4 382.5,217.2 383.5,217.0 384.5,216.7 385.5,216.3 386.5,215.9 387.5,215.5 388.5,215.1 389.5,214.1 390.5,212.8 391.5,211.6 392.5,210.3 393.5,209.1 394.5,207.6 395.5,206.1 396.5,204.6 397.5,203.1 398.5,201.6 399.5,200.1 400.5,198.6 401.5,197.1 402.5,195.6 403.5,194.1 404.5,192.9 405.5,191.7 406.5,190.6 407.5,189.4 408.5,188.3 409.5,187.7 410.5,187.4 411.5,187.0 412.5,186.7 413.5,186.3 414.5,186.4 415.5,186.5 416.5,186.7 417.5,186.8 418.5,187.0 419.5,187.5 420.5,188.2 421.5,188.9 422.5,189.6 423.5,190.3 424.5,191.2 425.5,192.1 426.5,193.0 427.5,193.9 428.5,194.8 429.5,195.7 430.5,196.6 431.5,197.5 432.5,198.4 433.5,199.3 434.5,200.0 435.5,200.7 436.5,201.4 437.5,202.1 438.5,202.8 439.5,203.8 440.5,204.8 441.5,205.8 442.5,206.8 443.5,207.8 444.5,208.7 445.5,209.6 446.5,210.5 447.5,211.4 448.5,212.3 449.5,212.9 450.5,213.6 451.5,214.2 452.5,214.8 453.5,215.3 454.5,215.5 455.5,215.5 456.5,215.5 457.5,215.5 458.5,215.5 459.5,215.0 460.5,214.3 461.5,213.6 462.5,212.9 463.5,212.2 464.5,211.5 465.5,210.8 466.5,210.2 467.5,209.5 468.5,210.3 469.5,211.1 470.5,211.9 471.5,212.9 472.5,214.4 473.5,215.9 474.5,217.4 475.5,218.9 476.5,220.4 477.5,222.2 478.5,223.9 479.5,225.7 480.5,227.4 481.5,229.1 482.5,230.6 483.5,232.1 484.5,233.6 485.5,235.1 486.5,236.6 487.5,237.8 488.5,239.1 489.5,240.3 490.5,241.6 491.5,242.7 492.5,243.3 493.5,244.0 494.5,244.7 495.5,245.1 496.5,245.2 497.5,245.2 498.5,245.3 499.5,245.4 500.5,245.4 501.5,245.3 502.5,245.2 503.5,245.0 504.5,244.9 505.5,244.8 506.5,244.6 507.5,244.5 508.5,244.5 509.5,244.5 510.5,244.5 511.5,244.5 512.5,244.5 513.5,244.5 514.5,244.0 515.5,243.4 516.5,242.7 517.5,242.1 518.5,241.4 519.5,241.2 520.5,241.2 521.5,241.2 522.5,241.2 523.5,241.2 524.5,242.0 525.5,243.0 526.5,244.0 527.5,245.0 528.5,246.0 529.5,247.6 530.5,249.3 531.5,251.1 532.5,252.8 533.5,254.6 534.5,256.3 535.5,258.1 536.5,259.8 537.5,261.6 538.5,263.3 539.5,264.9 540.5,266.4 541.5,267.9 542.5,269.4 543.5,270.9 544.5,271.6 545.5,272.1 546.5,272.6 547.5,273.1 548.5,273.6 549.5,271.9 550.5,269.4 551.5,266.7 552.5,263.3 553.5,260.0 554.5,256.7 555.5,253.8 556.5,251.2 557.5,248.8 558.5,246.2 559.5,243.8 560.5,241.4 561.5,239.1 562.5,236.9 563.5,234.6 564.5,232.4 565.5,230.6 566.5,229.4 567.5,228.1 568.5,226.9 569.5,225.6 570.5,225.1 571.5,225.4 572.5,225.6 573.5,225.9 574.5,226.1 575.5,226.6 576.5,227.4 577.5,228.1 578.5,228.9 579.5,229.6 580.5,230.1 581.5,230.2 582.5,230.2 583.5,230.3 584.5,230.4 585.5,229.8 586.5,228.3 587.5,226.8 588.5,225.4 589.5,225.8 590.5,226.8 591.5,229.5 592.5,237.5 593.5,240.8 594.5,244.2 595.5,247.5 596.5,250.8 597.5,254.2 598.5,257.5 599.5,260.8 600.5,263.8 601.5,266.5 602.5,269.2 603.5,271.8 604.5,273.4 605.5,274.7 606.5,275.9 607.5,277.2 608.5,278.4 609.5,278.8 610.5,279.0 611.5,279.1 612.5,279.2 613.5,279.3 614.5,279.4 615.5,279.1 616.5,278.1 617.5,277.2 618.5,276.4 619.5,275.4 620.5,274.4 621.5,273.2 622.5,272.0 623.5,270.8 624.5,270.3 625.5,270.0 626.5,269.7 627.5,269.4 628.5,269.2 629.5,268.9 630.5,268.6 631.5,268.4 632.5,268.2 633.5,267.9 634.5,267.7 635.5,267.5 636.5,267.2 637.5,267.0 638.5,266.8 639.5,266.6 640.5,266.4 641.5,266.2 642.5,266.0 643.5,265.8 644.5,265.6 645.5,265.4 646.5,265.3 647.5,265.2 648.5,265.0 649.5,264.9 650.5,264.8 651.5,264.6 652.5,264.5 653.5,264.8 654.5,265.0 655.5,265.3 656.5,265.8 657.5,266.9 658.5,268.1 659.5,269.2 660.5,270.4 661.5,271.6 662.5,272.8 663.5,274.1 664.5,275.3 665.5,276.6 666.5,277.8 667.5,279.1 668.5,280.3 669.5,281.6 670.5,282.8 671.5,284.1 672.5,285.6 673.5,287.1 674.5,288.6 675.5,290.1 676.5,291.5 677.5,292.5 678.5,293.5 679.5,294.5 680.5,295.5 681.5,296.4 682.5,296.9 683.5,297.4 684.5,297.9 685.5,298.4 686.5,298.8 687.5,298.8 688.5,298.8 689.5,298.8 690.5,298.8 691.5,298.8 692.5,298.8 693.5,298.8 694.5,298.9 695.5,299.1 696.5,299.3 697.5,299.5 698.5,299.7 699.5,299.9 700.5,300.2 701.5,300.7 702.5,301.1 703.5,301.6 704.5,302.0 705.5,302.6 706.5,303.4 707.5,304.2 708.5,305.1 709.5,305.9 710.5,306.8 711.5,307.8 712.5,308.8 713.5,309.8 714.5,310.8 715.5,311.8 716.5,312.9 717.5,314.1 718.5,315.2 719.5,316.3 720.5,317.5 721.5,318.6 722.5,319.7 723.5,320.8 724.5,321.9 725.5,322.8 726.5,323.4 727.5,324.1 728.5,324.7 729.5,325.3 730.5,325.6 731.5,325.6 732.5,325.6 733.5,325.6 734.5,325.6 735.5,325.6 736.5,325.6 737.5,325.6 738.5,325.4 739.5,325.1 740.5,324.9 741.5,324.6 742.5,324.4 743.5,324.1 744.5,323.8 745.5,323.5 746.5,323.2 747.5,322.7 748.5,322.0 749.5,321.2 750.5,320.5 751.5,320.0 752.5,319.9 753.5,319.9 754.5,319.8 755.5,319.8 756.5,319.8 757.5,319.8 758.5,319.8 759.5,319.9 760.5,319.9 761.5,320.0 762.5,320.0" fill="none" stroke="#8b8e8d" stroke-width="6" stroke-linejoin="round" stroke-linecap="round"/>
<polyline points="5.5,146.2 6.5,147.7 7.5,149.1 8.5,150.5 9.5,152.0 10.5,153.4 11.5,154.8 12.5,156.2 13.5,157.4 14.5,158.7 15.5,159.8 16.5,161.1 17.5,162.2 18.5,163.4 19.5,164.3 20.5,165.2 21.5,165.9 22.5,166.8 23.5,167.6 24.5,168.3 25.5,169.1 26.5,169.7 27.5,170.2 28.5,170.8 29.5,171.4 30.5,172.1 31.5,172.6 32.5,173.0 33.5,173.4 34.5,173.8 35.5,174.2 36.5,174.6 37.5,175.0 38.5,176.4 39.5,177.8 40.5,179.2 41.5,180.6 42.5,182.0 43.5,183.4 44.5,184.5 45.5,185.5 46.5,186.5 47.5,187.5 48.5,188.5 49.5,189.5 50.5,190.2 51.5,190.6 52.5,191.0 53.5,191.4 54.5,191.8 55.5,192.2 56.5,192.3 57.5,191.6 58.5,190.8 59.5,190.1 60.5,189.3 61.5,188.6 62.5,187.8 63.5,187.1 64.5,186.3 65.5,185.6 66.5,185.0 67.5,185.0 68.5,185.0 69.5,185.0 70.5,185.0 71.5,185.2 72.5,186.2 73.5,187.2 74.5,188.2 75.5,189.6 76.5,191.4 77.5,193.1 78.5,194.9 79.5,196.6 80.5,198.2 81.5,199.8 82.5,201.2 83.5,202.8 84.5,204.2 85.5,205.5 86.5,206.5 87.5,207.5 88.5,208.5 89.5,209.5 90.5,210.3 91.5,210.9 92.5,211.5 93.5,212.1 94.5,212.7 95.5,213.3 96.5,213.8 97.5,214.2 98.5,214.6 99.5,214.9 100.5,215.3 101.5,215.6 102.5,216.0 103.5,216.3 104.5,216.6 105.5,216.9 106.5,217.0 107.5,217.0 108.5,217.0 109.5,217.0 110.5,217.0 111.5,217.0 112.5,217.0 113.5,217.0 114.5,217.0 115.5,217.0 116.5,217.0 117.5,217.0 118.5,217.0 119.5,217.0 120.5,217.0 121.5,216.9 122.5,216.9 123.5,216.8 124.5,216.7 125.5,216.7 126.5,216.6 127.5,216.6 128.5,216.5 129.5,214.6 130.5,211.9 131.5,209.1" fill="none" stroke="#dc143c" stroke-width="2" stroke-linejoin="round"/>
<polyline points="131.5,209.1 132.5,205.6 133.5,202.1 134.5,200.1 135.5,198.6 136.5,197.1 137.5,195.6 138.5,194.1 139.5,193.2 140.5,192.3 141.5,191.6 142.5,190.8 143.5,189.9 144.5,189.2 145.5,188.6 146.5,188.2 147.5,187.8 148.5,187.3 149.5,186.9 150.5,186.6 151.5,186.2 152.5,185.8 153.5,185.0 154.5,184.2 155.5,183.4 156.5,182.7 157.5,181.9 158.5,181.2 159.5,180.4 160.5,179.5 161.5,178.5 162.5,177.5 163.5,176.5 164.5,175.5 165.5,174.5 166.5,173.6 167.5,173.1 168.5,172.6 169.5,172.1 170.5,171.5 171.5,171.0 172.5,170.5 173.5,170.4 174.5,170.2 175.5,170.1 176.5,170.0 177.5,169.8 178.5,169.7 179.5,169.6 180.5,169.4 181.5,169.1 182.5,168.8 183.5,168.6 184.5,168.3 185.5,168.0 186.5,167.8 187.5,167.5 188.5,167.4 189.5,167.3 190.5,167.3 191.5,167.2 192.5,167.1 193.5,167.0 194.5,167.6 195.5,168.5 196.5,169.3 197.5,170.2 198.5,171.0 199.5,173.0 200.5,175.3" fill="none" stroke="#3cb371" stroke-width="2" stroke-linejoin="round"/>
<polyline points="200.5,175.3 201.5,177.7 202.5,180.0 203.5,181.2 204.5,182.5 205.5,183.8 206.5,185.0 207.5,186.2 208.5,186.4 209.5,186.7 210.5,186.8 211.5,187.1 212.5,187.2 213.5,187.4 214.5,186.0 215.5,184.0 216.5,182.0" fill="none" stroke="#dc143c" stroke-width="2" stroke-linejoin="round"/>
<polyline points="215.5,184.0 216.5,182.0 217.5,180.0 218.5,178.0 219.5,176.0 220.5,174.0 221.5,172.0 222.5,170.0 223.5,168.7 224.5,167.4 225.5,166.2 226.5,164.9 227.5,163.6 228.5,162.3 229.5,161.6 230.5,161.1 231.5,160.6 232.5,160.1 233.5,159.5 234.5,159.0 235.5,158.8 236.5,158.9 237.5,159.1 238.5,159.2 239.5,159.3 240.5,159.4 241.5,159.6 242.5,160.1 243.5,160.6 244.5,161.0 245.5,161.3 246.5,161.6 247.5,161.8 248.5,161.9 249.5,162.2 250.5,162.3 251.5,162.3 252.5,161.8 253.5,161.2 254.5,160.6 255.5,159.9 256.5,159.3 257.5,158.8 258.5,158.1 259.5,157.4 260.5,156.8 261.5,156.1 262.5,155.4 263.5,154.8 264.5,154.1 265.5,153.3 266.5,152.5 267.5,151.7 268.5,150.8 269.5,150.0 270.5,149.2 271.5,148.3 272.5,147.5 273.5,147.1 274.5,146.6 275.5,146.2 276.5,145.7 277.5,146.0 278.5,147.1 279.5,148.1 280.5,149.2" fill="none" stroke="#3cb371" stroke-width="2" stroke-linejoin="round"/>
<polyline points="280.5,149.2 281.5,150.5 282.5,152.5 283.5,154.5 284.5,156.5 285.5,158.5 286.5,160.8 287.5,164.2 288.5,167.5 289.5,170.8 290.5,174.4 291.5,178.1 292.5,181.9 293.5,182.5 294.5,180.0 295.5,177.5 296.5,172.1" fill="none" stroke="#dc143c" stroke-width="2" stroke-linejoin="round"/>
<polyline points="296.5,172.1 297.5,166.7 298.5,161.3 299.5,157.0 300.5,153.0 301.5,149.0 302.5,145.0 303.5,142.0 304.5,139.0 305.5,136.0 306.5,133.5 307.5,132.5 308.5,131.5 309.5,130.5 310.5,133.3 311.5,136.1 312.5,142.5" fill="none" stroke="#3cb371" stroke-width="2" stroke-linejoin="round"/>
<polyline points="312.5,142.5 313.5,152.5 314.5,158.8 315.5,163.8 316.5,168.2 317.5,170.8 318.5,173.5 319.5,176.2 320.5,178.8 321.5,181.5 322.5,184.2 323.5,186.8 324.5,189.2 325.5,191.6 326.5,193.9 327.5,196.2 328.5,198.2 329.5,200.2 330.5,202.2 331.5,204.0 332.5,205.0 333.5,206.0 334.5,207.0 335.5,208.0 336.5,208.8 337.5,209.2 338.5,209.5 339.5,209.9 340.5,210.2 341.5,210.4 342.5,210.1 343.5,209.7 344.5,209.4 345.5,209.0 346.5,208.3 347.5,206.7 348.5,205.0 349.5,203.3 350.5,201.7 351.5,200.0 352.5,198.3 353.5,196.7 354.5,196.0 355.5,195.7 356.5,195.3 357.5,195.0 358.5,196.0 359.5,197.0 360.5,198.0 361.5,199.2 362.5,201.2 363.5,203.2 364.5,205.2 365.5,207.1 366.5,208.8 367.5,210.4 368.5,212.1 369.5,213.4 370.5,214.6 371.5,215.8 372.5,217.0 373.5,217.2 374.5,217.4 375.5,217.6 376.5,217.8 377.5,218.0 378.5,217.8 379.5,217.7 380.5,217.5 381.5,217.4 382.5,217.2 383.5,217.0 384.5,216.7 385.5,216.3 386.5,215.9 387.5,215.5 388.5,215.1 389.5,214.1 390.5,212.8 391.5,211.6 392.5,210.3 393.5,209.1 394.5,207.6 395.5,206.1 396.5,204.6 397.5,203.1 398.5,201.6 399.5,200.1 400.5,198.6 401.5,197.1 402.5,195.6 403.5,194.1 404.5,192.9 405.5,191.7 406.5,190.6 407.5,189.4 408.5,188.3 409.5,187.7 410.5,187.4 411.5,187.0 412.5,186.7 413.5,186.3 414.5,186.4 415.5,186.5 416.5,186.7 417.5,186.8 418.5,187.0 419.5,187.5 420.5,188.2 421.5,188.9 422.5,189.6 423.5,190.3 424.5,191.2 425.5,192.1 426.5,193.0 427.5,193.9 428.5,194.8 429.5,195.7 430.5,196.6 431.5,197.5 432.5,198.4 433.5,199.3 434.5,200.0 435.5,200.7 436.5,201.4 437.5,202.1 438.5,202.8 439.5,203.8 440.5,204.8 441.5,205.8 442.5,206.8 443.5,207.8 444.5,208.7 445.5,209.6 446.5,210.5 447.5,211.4 448.5,212.3 449.5,212.9 450.5,213.6 451.5,214.2 452.5,214.8 453.5,215.3 454.5,215.5 455.5,215.5 456.5,215.5 457.5,215.5 458.5,215.5 459.5,215.0 460.5,214.3 461.5,213.6 462.5,212.9 463.5,212.2 464.5,211.5 465.5,210.8 466.5,210.2 467.5,209.5 468.5,210.3 469.5,211.1 470.5,211.9 471.5,212.9 472.5,214.4 473.5,215.9 474.5,217.4 475.5,218.9 476.5,220.4 477.5,222.2 478.5,223.9 479.5,225.7 480.5,227.4 481.5,229.1 482.5,230.6 483.5,232.1 484.5,233.6 485.5,235.1 486.5,236.6 487.5,237.8 488.5,239.1 489.5,240.3 490.5,241.6 491.5,242.7 492.5,243.3 493.5,244.0 494.5,244.7 495.5,245.1 496.5,245.2 497.5,245.2 498.5,245.3 499.5,245.4 500.5,245.4 501.5,245.3 502.5,245.2 503.5,245.0 504.5,244.9 505.5,244.8 506.5,244.6 507.5,244.5 508.5,244.5 509.5,244.5 510.5,244.5 511.5,244.5 512.5,244.5 513.5,244.5 514.5,244.0 515.5,243.4 516.5,242.7 517.5,242.1 518.5,241.4 519.5,241.2 520.5,241.2 521.5,241.2 522.5,241.2 523.5,241.2 524.5,242.0 525.5,243.0 526.5,244.0 527.5,245.0 528.5,246.0 529.5,247.6 530.5,249.3 531.5,251.1 532.5,252.8 533.5,254.6 534.5,256.3 535.5,258.1 536.5,259.8 537.5,261.6 538.5,263.3 539.5,264.9 540.5,266.4 541.5,267.9 542.5,269.4 543.5,270.9 544.5,271.6 545.5,272.1 546.5,272.6 547.5,273.1 548.5,273.6 549.5,271.9 550.5,269.4 551.5,266.7 552.5,263.3" fill="none" stroke="#dc143c" stroke-width="2" stroke-linejoin="round"/>
<polyline points="551.5,266.7 552.5,263.3 553.5,260.0 554.5,256.7 555.5,253.8 556.5,251.2 557.5,248.8 558.5,246.2 559.5,243.8 560.5,241.4 561.5,239.1 562.5,236.9 563.5,234.6 564.5,232.4 565.5,230.6 566.5,229.4 567.5,228.1 568.5,226.9 569.5,225.6 570.5,225.1 571.5,225.4 572.5,225.6 573.5,225.9 574.5,226.1 575.5,226.6 576.5,227.4 577.5,228.1 578.5,228.9 579.5,229.6 580.5,230.1 581.5,230.2 582.5,230.2 583.5,230.3 584.5,230.4 585.5,229.8 586.5,228.3 587.5,226.8 588.5,225.4 589.5,225.8 590.5,226.8 591.5,229.5 592.5,237.5" fill="none" stroke="#3cb371" stroke-width="2" stroke-linejoin="round"/>
<polyline points="592.5,237.5 593.5,240.8 594.5,244.2 595.5,247.5 596.5,250.8 597.5,254.2 598.5,257.5 599.5,260.8 600.5,263.8 601.5,266.5 602.5,269.2 603.5,271.8 604.5,273.4 605.5,274.7 606.5,275.9 607.5,277.2 608.5,278.4 609.5,278.8 610.5,279.0 611.5,279.1 612.5,279.2 613.5,279.3 614.5,279.4 615.5,279.1 616.5,278.1 617.5,277.2 618.5,276.4 619.5,275.4 620.5,274.4" fill="none" stroke="#dc143c" stroke-width="2" stroke-linejoin="round"/>
<polyline points="620.5,274.4 621.5,273.2 622.5,272.0 623.5,270.8 624.5,270.3 625.5,270.0 626.5,269.7 627.5,269.4 628.5,269.2 629.5,268.9 630.5,268.6 631.5,268.4 632.5,268.2 633.5,267.9 634.5,267.7 635.5,267.5 636.5,267.2 637.5,267.0 638.5,266.8 639.5,266.6 640.5,266.4 641.5,266.2 642.5,266.0 643.5,265.8 644.5,265.6 645.5,265.4 646.5,265.3 647.5,265.2 648.5,265.0 649.5,264.9 650.5,264.8 651.5,264.6 652.5,264.5 653.5,264.8 654.5,265.0 655.5,265.3 656.5,265.8" fill="none" stroke="#3cb371" stroke-width="2" stroke-linejoin="round"/>
<polyline points="656.5,265.8 657.5,266.9 658.5,268.1 659.5,269.2 660.5,270.4 661.5,271.6 662.5,272.8 663.5,274.1 664.5,275.3 665.5,276.6 666.5,277.8 667.5,279.1 668.5,280.3 669.5,281.6 670.5,282.8 671.5,284.1 672.5,285.6 673.5,287.1 674.5,288.6 675.5,290.1 676.5,291.5 677.5,292.5 678.5,293.5 679.5,294.5 680.5,295.5 681.5,296.4 682.5,296.9 683.5,297.4 684.5,297.9 685.5,298.4 686.5,298.8 687.5,298.8 688.5,298.8 689.5,298.8 690.5,298.8 691.5,298.8 692.5,298.8 693.5,298.8 694.5,298.9 695.5,299.1 696.5,299.3 697.5,299.5 698.5,299.7 699.5,299.9 700.5,300.2 701.5,300.7 702.5,301.1 703.5,301.6 704.5,302.0 705.5,302.6 706.5,303.4 707.5,304.2 708.5,305.1 709.5,305.9 710.5,306.8 711.5,307.8 712.5,308.8 713.5,309.8 714.5,310.8 715.5,311.8 716.5,312.9 717.5,314.1 718.5,315.2 719.5,316.3 720.5,317.5 721.5,318.6 722.5,319.7 723.5,320.8 724.5,321.9 725.5,322.8 726.5,323.4 727.5,324.1 728.5,324.7 729.5,325.3 730.5,325.6 731.5,325.6 732.5,325.6 733.5,325.6 734.5,325.6 735.5,325.6 736.5,325.6 737.5,325.6 738.5,325.4 739.5,325.1 740.5,324.9 741.5,324.6 742.5,324.4 743.5,324.1 744.5,323.8 745.5,323.5 746.5,323.2 747.5,322.7 748.5,322.0 749.5,321.2 750.5,320.5 751.5,320.0 752.5,319.9 753.5,319.9 754.5,319.8 755.5,319.8 756.5,319.8 757.5,319.8 758.5,319.8 759.5,319.9 760.5,319.9 761.5,320.0 762.5,320.0" fill="none" stroke="#dc143c" stroke-width="2" stroke-linejoin="round"/>
<circle cx="132.5" cy="206.25" r="4.6" fill="#32cd32" shape-rendering="auto"/>
<circle cx="200.5" cy="174.25" r="4.6" fill="#ffa500" shape-rendering="auto"/>
<circle cx="216.25" cy="180" r="4.6" fill="#32cd32" shape-rendering="auto"/>
<circle cx="280.5" cy="147.5" r="4.6" fill="#ffa500" shape-rendering="auto"/>
<circle cx="296.5" cy="164.5" r="4.6" fill="#32cd32" shape-rendering="auto"/>
<circle cx="312.5" cy="155.5" r="4.6" fill="#ffa500" shape-rendering="auto"/>
<circle cx="552.5" cy="264.5" r="4.6" fill="#32cd32" shape-rendering="auto"/>
<circle cx="592.5" cy="234.5" r="4.6" fill="#ffa500" shape-rendering="auto"/>
<circle cx="620.5" cy="278.25" r="4.6" fill="#32cd32" shape-rendering="auto"/>
<circle cx="656.5" cy="265.5" r="4.6" fill="#ffa500" shape-rendering="auto"/>
<line x1="5" y1="359.5" x2="957" y2="359.5" stroke="#c0c0c0" stroke-width="1" stroke-dasharray="3,3"/>
<polyline points="5.5,370.5 6.5,372.1 7.5,373.7 8.5,375.3 9.5,376.9 10.5,378.5 11.5,380.1 12.5,381.2 13.5,382.4 14.5,383.6 15.5,384.9 16.5,386.1 17.5,387.2 18.5,387.9 19.5,388.6 20.5,389.3 21.5,390.0 22.5,390.6 23.5,391.3 24.5,392.1 25.5,392.9 26.5,393.7 27.5,394.5 28.5,395.3 29.5,396.1 30.5,396.6 31.5,396.9 32.5,397.1 33.5,397.3 34.5,397.6 35.5,397.8 36.5,398.2 37.5,399.0 38.5,399.8 39.5,400.6 40.5,401.4 41.5,402.2 42.5,403.0 43.5,403.7 44.5,404.4 45.5,405.0 46.5,405.7 47.5,406.4 48.5,407.1 49.5,406.7 50.5,405.9 51.5,405.2 52.5,404.4 53.5,403.7 54.5,402.4 55.5,401.1 56.5,399.6 57.5,398.2 58.5,396.9 59.5,395.4 60.5,394.4 61.5,393.9 62.5,393.2 63.5,392.6 64.5,392.1 65.5,391.4 66.5,391.1 67.5,391.3 68.5,391.6 69.5,391.8 70.5,392.1 71.5,392.5 72.5,393.5 73.5,394.5 74.5,395.5 75.5,396.5 76.5,397.5 77.5,398.5 78.5,399.5 79.5,400.5 80.5,401.5 81.5,402.3 82.5,402.6 83.5,402.8 84.5,403.1 85.5,403.3 86.5,403.6 87.5,403.8 88.5,404.1 89.5,404.3 90.5,404.6 91.5,404.8 92.5,404.8 93.5,404.8 94.5,404.8 95.5,404.8 96.5,404.6 97.5,404.1 98.5,403.6 99.5,403.1 100.5,402.6 101.5,402.0 102.5,401.0 103.5,400.0 104.5,399.0 105.5,398.0 106.5,397.0 107.5,396.0 108.5,395.0 109.5,394.0 110.5,393.0 111.5,392.0 112.5,391.0 113.5,390.0 114.5,389.1 115.5,388.3 116.5,387.5 117.5,386.6 118.5,385.8 119.5,385.0 120.5,384.1 121.5,383.2 122.5,382.0 123.5,380.8 124.5,379.6 125.5,378.4 126.5,377.2 127.5,376.0 128.5,374.5 129.5,373.0 130.5,371.5 131.5,370.0 132.5,368.5 133.5,367.5 134.5,366.5 135.5,365.5 136.5,364.5 137.5,363.5 138.5,363.0 139.5,362.5 140.5,362.1 141.5,361.6 142.5,361.1 143.5,360.6 144.5,360.4 145.5,360.1 146.5,359.9 147.5,359.8 148.5,359.6 149.5,359.4 150.5,359.2" fill="none" stroke="#ff0000" stroke-width="2.4" />
<polyline points="149.5,359.4 150.5,359.2 151.5,359.1 152.5,358.9 153.5,358.8 154.5,358.7 155.5,358.6 156.5,358.4 157.5,357.8 158.5,357.1 159.5,356.6 160.5,355.9 161.5,355.4 162.5,354.8 163.5,354.1 164.5,353.4 165.5,352.8 166.5,352.1 167.5,351.4 168.5,350.8 169.5,350.1 170.5,349.5 171.5,349.0 172.5,348.5 173.5,348.0 174.5,347.5 175.5,347.0 176.5,346.5 177.5,346.0 178.5,345.7 179.5,345.4 180.5,345.0 181.5,344.7 182.5,344.4 183.5,344.1 184.5,344.0 185.5,344.1 186.5,344.1 187.5,344.2 188.5,344.2 189.5,344.6 190.5,345.1 191.5,345.6 192.5,346.1 193.5,346.5 194.5,347.0 195.5,347.6 196.5,348.4 197.5,349.1 198.5,349.9 199.5,350.6 200.5,351.2 201.5,351.6 202.5,352.0 203.5,352.4 204.5,352.8 205.5,353.0 206.5,353.0 207.5,353.0 208.5,353.0 209.5,353.0 210.5,353.0 211.5,352.9 212.5,352.5 213.5,352.1 214.5,351.7 215.5,351.3 216.5,350.9 217.5,350.5 218.5,350.3 219.5,350.0 220.5,349.8 221.5,349.5 222.5,349.3 223.5,349.1 224.5,348.9 225.5,348.9 226.5,348.8 227.5,348.7 228.5,348.6 229.5,348.5 230.5,348.5 231.5,348.6 232.5,348.7 233.5,348.7 234.5,348.8 235.5,348.9 236.5,348.9 237.5,349.0 238.5,349.2 239.5,349.4 240.5,349.6 241.5,349.8 242.5,350.0 243.5,350.2 244.5,350.4 245.5,350.5 246.5,350.6 247.5,350.6 248.5,350.7 249.5,350.7 250.5,350.6 251.5,350.3 252.5,350.0 253.5,349.7 254.5,349.4 255.5,349.1 256.5,348.8 257.5,348.5 258.5,348.2 259.5,348.0 260.5,347.7 261.5,347.4 262.5,347.2 263.5,346.9 264.5,346.6 265.5,346.4 266.5,346.3 267.5,346.1 268.5,345.9 269.5,345.8 270.5,345.6 271.5,345.5 272.5,345.6 273.5,345.7 274.5,345.8 275.5,345.9 276.5,346.2 277.5,346.9 278.5,347.7 279.5,348.4 280.5,349.2 281.5,350.1 282.5,351.3 283.5,352.6 284.5,353.8 285.5,355.1 286.5,356.1 287.5,356.4 288.5,356.8 289.5,357.1 290.5,357.2 291.5,357.0 292.5,356.9 293.5,356.7 294.5,356.6 295.5,356.2 296.5,355.6 297.5,355.0 298.5,354.4 299.5,353.8 300.5,353.6 301.5,353.7 302.5,353.8 303.5,353.9 304.5,354.0 305.5,354.8 306.5,355.5 307.5,356.3 308.5,357.1 309.5,357.5 310.5,357.9 311.5,358.2 312.5,358.6 313.5,358.9" fill="none" stroke="#32cd32" stroke-width="2.4" />
<polyline points="313.5,358.9 314.5,359.2 315.5,359.4 316.5,359.7 317.5,359.9 318.5,360.1 319.5,360.4 320.5,360.7 321.5,361.0 322.5,361.4 323.5,361.7 324.5,362.1 325.5,362.6 326.5,363.4 327.5,364.1 328.5,364.9 329.5,365.6 330.5,366.2 331.5,366.7 332.5,367.2 333.5,367.7 334.5,368.2 335.5,368.6 336.5,369.0 337.5,368.9 338.5,368.8 339.5,368.7 340.5,368.6 341.5,368.4 342.5,367.9 343.5,367.4 344.5,366.9 345.5,366.4 346.5,365.9 347.5,365.4 348.5,364.9 349.5,364.4 350.5,363.9 351.5,363.6 352.5,364.0 353.5,364.4 354.5,364.8 355.5,365.2 356.5,365.6 357.5,365.8 358.5,365.9 359.5,366.1 360.5,366.4 361.5,366.6 362.5,367.1 363.5,367.6 364.5,368.1 365.5,368.6 366.5,369.1 367.5,369.2 368.5,369.4 369.5,369.6 370.5,369.9 371.5,370.0 372.5,369.8 373.5,369.6 374.5,369.5 375.5,369.3 376.5,369.2 377.5,369.0 378.5,368.9 379.5,368.9 380.5,368.8 381.5,368.7 382.5,368.7 383.5,368.6 384.5,368.5 385.5,368.2 386.5,367.8 387.5,367.2 388.5,366.8 389.5,366.2 390.5,365.7 391.5,365.1 392.5,364.5 393.5,363.9 394.5,363.3 395.5,362.8 396.5,362.4 397.5,362.0 398.5,361.6 399.5,361.2 400.5,360.8 401.5,360.5 402.5,360.2 403.5,359.9 404.5,359.6 405.5,359.2 406.5,359.0 407.5,359.0 408.5,359.0 409.5,359.0 410.5,359.0 411.5,359.0 412.5,359.0 413.5,359.0" fill="none" stroke="#ff0000" stroke-width="2.4" />
<polyline points="413.5,359.0 414.5,359.0 415.5,359.0 416.5,359.0 417.5,359.0 418.5,359.0 419.5,359.0 420.5,359.0 421.5,359.0" fill="none" stroke="#32cd32" stroke-width="2.4" />
<polyline points="421.5,359.0 422.5,359.0 423.5,359.0 424.5,359.0 425.5,359.0 426.5,359.0 427.5,359.0 428.5,359.0 429.5,359.0 430.5,359.0 431.5,359.0 432.5,359.0 433.5,359.0 434.5,359.1 435.5,359.1 436.5,359.2 437.5,359.2 438.5,359.2 439.5,359.3 440.5,359.3 441.5,359.4 442.5,359.4 443.5,359.4 444.5,359.5 445.5,359.6 446.5,359.7 447.5,359.9 448.5,360.0 449.5,360.2 450.5,360.2 451.5,360.2 452.5,360.2 453.5,360.2 454.5,360.2 455.5,360.1 456.5,360.1 457.5,360.1 458.5,360.1 459.5,360.1 460.5,360.1 461.5,360.0 462.5,360.0 463.5,360.0 464.5,360.4 465.5,360.8 466.5,361.3 467.5,361.8 468.5,362.3 469.5,362.8 470.5,363.2 471.5,363.7 472.5,364.2 473.5,364.7 474.5,365.2 475.5,365.6 476.5,366.1 477.5,366.6 478.5,367.1 479.5,367.6 480.5,368.1 481.5,368.8 482.5,369.8 483.5,370.8 484.5,371.8 485.5,372.8 486.5,373.8 487.5,374.8 488.5,375.8 489.5,376.8 490.5,377.8 491.5,378.8 492.5,379.8 493.5,380.8 494.5,381.2 495.5,381.5 496.5,381.8 497.5,382.1 498.5,382.3 499.5,382.6 500.5,382.8 501.5,382.8 502.5,382.8 503.5,382.8 504.5,382.8 505.5,382.8 506.5,382.6 507.5,382.1 508.5,381.6 509.5,381.1 510.5,380.6 511.5,380.2 512.5,379.9 513.5,379.7 514.5,379.4 515.5,379.2 516.5,379.0 517.5,379.1 518.5,379.1 519.5,379.2 520.5,379.2 521.5,379.4 522.5,380.0 523.5,380.6 524.5,381.2 525.5,381.8 526.5,382.6 527.5,383.8 528.5,385.1 529.5,386.3 530.5,387.6 531.5,388.8 532.5,389.8 533.5,390.8 534.5,391.8 535.5,392.8 536.5,393.8 537.5,394.8 538.5,394.8 539.5,394.8 540.5,394.8 541.5,394.8 542.5,394.8 543.5,394.8 544.5,394.8 545.5,394.2 546.5,393.2 547.5,392.2 548.5,391.2 549.5,390.2 550.5,388.6 551.5,386.4 552.5,384.1 553.5,381.9 554.5,379.6 555.5,377.6 556.5,375.8 557.5,374.0 558.5,372.2 559.5,370.4 560.5,368.6 561.5,367.0 562.5,366.2 563.5,365.3 564.5,364.5 565.5,363.6 566.5,362.9 567.5,362.7 568.5,362.5 569.5,362.2 570.5,362.0 571.5,361.7 572.5,361.5 573.5,361.3 574.5,361.1 575.5,360.9 576.5,360.7 577.5,360.5 578.5,360.3 579.5,360.1 580.5,359.8 581.5,359.6 582.5,359.4 583.5,359.1 584.5,358.9 585.5,358.8 586.5,358.9" fill="none" stroke="#ff0000" stroke-width="2.4" />
<polyline points="585.5,358.8 586.5,358.9 587.5,358.9 588.5,359.0 589.5,359.1 590.5,359.2" fill="none" stroke="#32cd32" stroke-width="2.4" />
<polyline points="589.5,359.1 590.5,359.2 591.5,359.3 592.5,359.7 593.5,360.0 594.5,360.3 595.5,360.7 596.5,361.0 597.5,361.3 598.5,361.7 599.5,362.1 600.5,362.4 601.5,362.9 602.5,363.2 603.5,363.6 604.5,364.1 605.5,364.4 606.5,364.8 607.5,365.0 608.5,365.3 609.5,365.5 610.5,365.7 611.5,366.0 612.5,366.2 613.5,366.4 614.5,366.5 615.5,366.6 616.5,366.6 617.5,366.6 618.5,366.6 619.5,366.7 620.5,366.7 621.5,366.7 622.5,366.8 623.5,366.7 624.5,366.6 625.5,366.6 626.5,366.5 627.5,366.4 628.5,366.4 629.5,366.3 630.5,366.2 631.5,366.1 632.5,366.1 633.5,366.0 634.5,365.9 635.5,365.8 636.5,365.8 637.5,365.7 638.5,365.6 639.5,365.5 640.5,365.4 641.5,365.3 642.5,365.2 643.5,365.1 644.5,365.0 645.5,364.9 646.5,364.8 647.5,364.7 648.5,364.6 649.5,364.4 650.5,364.3 651.5,364.3 652.5,364.7 653.5,365.1 654.5,365.4 655.5,365.8 656.5,366.1 657.5,366.5 658.5,367.1 659.5,367.7 660.5,368.3 661.5,368.9 662.5,369.5 663.5,370.1 664.5,370.8 665.5,371.5 666.5,372.2 667.5,372.9 668.5,373.7 669.5,374.4 670.5,375.4 671.5,376.9 672.5,378.2 673.5,379.6 674.5,381.1 675.5,382.4 676.5,383.8 677.5,384.8 678.5,385.8 679.5,386.8 680.5,387.8 681.5,388.8 682.5,389.3 683.5,389.3 684.5,389.4 685.5,389.4 686.5,389.5 687.5,389.5 688.5,389.6 689.5,389.6 690.5,389.7 691.5,389.7 692.5,389.8 693.5,390.2 694.5,390.6 695.5,391.1 696.5,391.5 697.5,391.9 698.5,392.4 699.5,392.8 700.5,393.4 701.5,394.2 702.5,394.9 703.5,395.7 704.5,396.5 705.5,397.2 706.5,398.0 707.5,398.8 708.5,399.6 709.5,400.8 710.5,402.2 711.5,403.6 712.5,405.0 713.5,406.4 714.5,407.8 715.5,409.1 716.5,410.4 717.5,411.7 718.5,413.0 719.5,414.3 720.5,415.5 721.5,416.7 722.5,417.4 723.5,418.1 724.5,418.8 725.5,419.5 726.5,419.9 727.5,419.5 728.5,419.1 729.5,418.7 730.5,418.3 731.5,417.8 732.5,416.9 733.5,415.9 734.5,415.0 735.5,414.1 736.5,413.2 737.5,412.2 738.5,410.5 739.5,408.8 740.5,407.0 741.5,405.2 742.5,403.5 743.5,401.5 744.5,399.5 745.5,397.5 746.5,395.5 747.5,393.5 748.5,392.3 749.5,391.1 750.5,389.9 751.5,388.9 752.5,388.4 753.5,387.9 754.5,387.5 755.5,386.8 756.5,385.9 757.5,385.0 758.5,384.2 759.5,383.3 760.5,382.4 761.5,381.5" fill="none" stroke="#ff0000" stroke-width="2.4" />
<polyline points="5.5,440.0 315.0,440.2 322.5,443.2 330.0,445.8 337.5,447.5 350.0,450.0 505.0,450.2 757.0,450.2" fill="none" stroke="#808080" stroke-width="1" stroke-dasharray="3,3"/>
<polyline points="5.5,473.2 55.0,473.2 75.0,473.8 95.0,475.2 107.5,477.5 120.0,480.8 135.0,483.2 150.0,485.2 165.0,487.0 180.0,488.2 195.0,488.5 210.0,487.8 225.0,486.5 240.0,485.0 250.0,484.5 260.0,483.5 275.0,481.5 290.0,479.5 305.0,477.5 315.0,476.5 332.5,476.2 365.0,475.8 375.0,474.5 390.0,473.0 415.0,471.5 430.0,471.0 455.0,470.2 475.0,470.0 490.0,470.0 505.0,469.5 525.0,471.5 545.0,473.2 562.5,474.5 587.5,475.8 625.0,477.5 650.0,479.0 675.0,480.0 700.0,481.5 725.0,482.8 750.0,484.5 757.0,485.0" fill="none" stroke="#808080" stroke-width="1" stroke-dasharray="3,3"/>
<polyline points="5.5,443.2 6.5,443.8 7.5,444.3 8.5,444.8 9.5,445.4 10.5,445.9 11.5,446.4 12.5,446.9 13.5,447.5 14.5,448.0 15.5,448.5 16.5,449.0 17.5,449.5 18.5,450.0 19.5,450.5 20.5,451.0 21.5,451.5 22.5,452.0 23.5,452.5 24.5,453.0 25.5,453.6 26.5,454.2 27.5,454.8 28.5,455.4 29.5,456.1 30.5,456.7 31.5,457.3 32.5,457.9 33.5,458.6 34.5,459.2 35.5,459.8 36.5,460.3 37.5,460.9 38.5,461.4 39.5,462.0 40.5,462.5 41.5,463.1 42.5,463.6 43.5,464.2 44.5,464.7 45.5,465.3 46.5,465.9 47.5,466.4 48.5,467.0 49.5,467.6 50.5,468.2 51.5,468.7 52.5,469.3 53.5,469.9 54.5,470.5 55.5,471.0 56.5,471.4 57.5,471.8 58.5,472.2 59.5,472.7 60.5,473.1 61.5,473.5 62.5,473.9 63.5,474.4 64.5,474.8 65.5,475.2 66.5,475.8 67.5,476.2 68.5,476.8 69.5,477.2 70.5,477.8 71.5,478.2 72.5,478.8 73.5,479.2 74.5,479.8 75.5,480.2 76.5,480.7 77.5,481.1 78.5,481.6 79.5,482.0 80.5,482.5 81.5,482.9 82.5,483.4 83.5,483.8 84.5,484.3 85.5,484.7 86.5,485.1 87.5,485.4 88.5,485.8 89.5,486.2 90.5,486.6 91.5,486.9 92.5,487.3 93.5,487.7 94.5,488.1 95.5,488.4 96.5,488.7 97.5,489.1 98.5,489.4 99.5,489.7 100.5,490.0 101.5,490.4 102.5,490.7 103.5,491.0 104.5,491.3 105.5,491.6 106.5,491.9 107.5,492.1 108.5,492.4 109.5,492.6 110.5,492.9 111.5,493.1 112.5,493.4 113.5,493.6 114.5,493.9 115.5,494.1 116.5,494.2 117.5,494.4 118.5,494.5 119.5,494.7 120.5,494.8 121.5,495.0 122.5,495.1 123.5,495.3 124.5,495.4 125.5,495.5 126.5,495.6 127.5,495.6 128.5,495.7 129.5,495.7 130.5,495.8 131.5,495.8 132.5,495.9 133.5,495.9 134.5,496.0 135.5,496.0 136.5,496.0 137.5,496.0 138.5,496.0 139.5,496.0 140.5,496.0 141.5,496.0 142.5,496.0" fill="none" stroke="#ff0000" stroke-width="2.4" />
<polyline points="141.5,496.0 142.5,496.0 143.5,496.0 144.5,496.0 145.5,495.9 146.5,495.9 147.5,495.9 148.5,495.9 149.5,495.9 150.5,495.8 151.5,495.8 152.5,495.8 153.5,495.8 154.5,495.8 155.5,495.7 156.5,495.5 157.5,495.3 158.5,495.1 159.5,495.0 160.5,494.8 161.5,494.6 162.5,494.4 163.5,494.3 164.5,494.1 165.5,493.9 166.5,493.7 167.5,493.5 168.5,493.3 169.5,493.1 170.5,492.9 171.5,492.7 172.5,492.5 173.5,492.3 174.5,492.1 175.5,491.9 176.5,491.6 177.5,491.4 178.5,491.1 179.5,490.9 180.5,490.6 181.5,490.4 182.5,490.1 183.5,489.9 184.5,489.6 185.5,489.4 186.5,489.2 187.5,489.0 188.5,488.8 189.5,488.6 190.5,488.4 191.5,488.2 192.5,488.0 193.5,487.8 194.5,487.6 195.5,487.4 196.5,487.2 197.5,487.1 198.5,486.9 199.5,486.7 200.5,486.5 201.5,486.4 202.5,486.2 203.5,486.0 204.5,485.8 205.5,485.6 206.5,485.4 207.5,485.1 208.5,484.9 209.5,484.6 210.5,484.4 211.5,484.1 212.5,483.9 213.5,483.6 214.5,483.4 215.5,483.2 216.5,483.1 217.5,482.9 218.5,482.8 219.5,482.7 220.5,482.6 221.5,482.4 222.5,482.3 223.5,482.2 224.5,482.1 225.5,481.9 226.5,481.7 227.5,481.5 228.5,481.3 229.5,481.1 230.5,480.9 231.5,480.7 232.5,480.5 233.5,480.3 234.5,480.1 235.5,479.9 236.5,479.6 237.5,479.4 238.5,479.1 239.5,478.9 240.5,478.6 241.5,478.4 242.5,478.1 243.5,477.9 244.5,477.6 245.5,477.4 246.5,477.4 247.5,477.2 248.5,477.1 249.5,477.1 250.5,476.9 251.5,476.6 252.5,476.2 253.5,475.9 254.5,475.6 255.5,475.4 256.5,475.1 257.5,474.8 258.5,474.4 259.5,474.1 260.5,473.9 261.5,473.6 262.5,473.4 263.5,473.1 264.5,472.9 265.5,472.6 266.5,472.4 267.5,472.1 268.5,471.9 269.5,471.6 270.5,471.4 271.5,471.2 272.5,471.0 273.5,470.8 274.5,470.6 275.5,470.4 276.5,470.2 277.5,470.0 278.5,469.8 279.5,469.6 280.5,469.4 281.5,469.3 282.5,469.1 283.5,469.0 284.5,468.8 285.5,468.7 286.5,468.5 287.5,468.4 288.5,468.2 289.5,468.1 290.5,467.9 291.5,467.8 292.5,467.6 293.5,467.5 294.5,467.3 295.5,467.2 296.5,467.0 297.5,466.9 298.5,466.7 299.5,466.6 300.5,466.4 301.5,466.4 302.5,466.2 303.5,466.1 304.5,466.1 305.5,465.9 306.5,465.9 307.5,465.8 308.5,465.6 309.5,465.6 310.5,465.5 311.5,465.4 312.5,465.4 313.5,465.3 314.5,465.3 315.5,465.2 316.5,465.2 317.5,465.1 318.5,465.1 319.5,465.0 320.5,465.0 321.5,465.0 322.5,464.9 323.5,464.9 324.5,464.9 325.5,464.9 326.5,464.8 327.5,464.8 328.5,464.8 329.5,464.8 330.5,464.8" fill="none" stroke="#00ff00" stroke-width="2.4" />
<polyline points="329.5,464.8 330.5,464.8 331.5,464.8 332.5,464.8 333.5,464.8 334.5,464.8 335.5,464.8 336.5,464.9 337.5,464.9 338.5,464.9 339.5,464.9 340.5,464.9 341.5,464.9 342.5,465.0 343.5,465.0 344.5,465.0 345.5,465.0 346.5,465.1 347.5,465.1 348.5,465.1 349.5,465.2 350.5,465.2 351.5,465.3 352.5,465.3 353.5,465.3 354.5,465.4 355.5,465.4 356.5,465.5 357.5,465.5 358.5,465.6 359.5,465.6 360.5,465.7 361.5,465.8 362.5,465.8 363.5,465.9 364.5,466.0 365.5,466.0 366.5,466.1 367.5,466.2 368.5,466.2 369.5,466.3 370.5,466.4 371.5,466.4 372.5,466.5 373.5,466.6 374.5,466.7 375.5,466.7 376.5,466.8 377.5,466.9 378.5,467.0 379.5,467.1 380.5,467.1 381.5,467.2 382.5,467.3 383.5,467.4 384.5,467.5 385.5,467.5 386.5,467.5 387.5,467.5 388.5,467.5 389.5,467.6 390.5,467.6 391.5,467.6 392.5,467.6 393.5,467.6 394.5,467.6 395.5,467.6 396.5,467.6 397.5,467.7 398.5,467.7 399.5,467.7 400.5,467.7 401.5,467.7 402.5,467.7 403.5,467.7 404.5,467.7 405.5,467.8 406.5,467.8 407.5,467.8 408.5,467.8 409.5,467.8 410.5,467.9 411.5,467.9 412.5,467.9 413.5,467.9 414.5,467.9 415.5,467.9 416.5,468.0 417.5,468.0 418.5,468.0 419.5,468.0 420.5,468.0 421.5,468.1 422.5,468.1 423.5,468.1 424.5,468.1 425.5,468.1 426.5,468.1 427.5,468.2 428.5,468.2 429.5,468.2 430.5,468.2 431.5,468.2 432.5,468.2 433.5,468.3 434.5,468.3 435.5,468.4 436.5,468.4 437.5,468.5 438.5,468.5 439.5,468.6 440.5,468.6 441.5,468.6 442.5,468.7 443.5,468.7 444.5,468.8 445.5,468.8 446.5,468.9 447.5,468.9 448.5,468.9 449.5,469.0 450.5,469.0 451.5,469.1 452.5,469.1 453.5,469.1 454.5,469.2 455.5,469.2 456.5,469.3 457.5,469.3 458.5,469.3 459.5,469.4 460.5,469.4 461.5,469.5 462.5,469.5 463.5,469.6 464.5,469.7 465.5,469.8 466.5,469.8 467.5,469.9 468.5,470.0 469.5,470.1 470.5,470.2 471.5,470.2 472.5,470.3 473.5,470.4 474.5,470.5 475.5,470.6 476.5,470.7 477.5,470.8 478.5,470.9 479.5,470.9 480.5,471.1 481.5,471.1 482.5,471.2 483.5,471.4 484.5,471.4 485.5,471.6 486.5,471.6 487.5,471.8 488.5,471.9 489.5,471.9 490.5,472.1 491.5,472.1 492.5,472.2 493.5,472.4 494.5,472.4 495.5,472.6 496.5,472.6 497.5,472.8 498.5,472.9 499.5,472.9 500.5,473.0 501.5,473.1 502.5,473.1 503.5,473.2 504.5,473.2 505.5,473.3 506.5,473.3 507.5,473.4 508.5,473.4 509.5,473.5 510.5,473.6 511.5,473.7 512.5,473.8 513.5,474.0 514.5,474.1 515.5,474.2 516.5,474.4 517.5,474.5 518.5,474.6 519.5,474.8 520.5,474.9 521.5,475.0 522.5,475.2 523.5,475.3 524.5,475.4 525.5,475.6 526.5,475.7 527.5,475.9 528.5,476.0 529.5,476.1 530.5,476.3 531.5,476.4 532.5,476.6 533.5,476.7 534.5,476.9 535.5,477.0 536.5,477.1 537.5,477.3 538.5,477.4 539.5,477.6 540.5,477.7 541.5,477.9 542.5,478.0 543.5,478.1 544.5,478.1 545.5,478.2 546.5,478.3 547.5,478.4 548.5,478.4 549.5,478.5 550.5,478.6 551.5,478.7 552.5,478.8 553.5,478.8 554.5,478.9 555.5,479.0 556.5,479.1 557.5,479.1 558.5,479.2 559.5,479.3 560.5,479.4 561.5,479.4 562.5,479.5 563.5,479.5 564.5,479.6 565.5,479.6 566.5,479.6 567.5,479.7 568.5,479.7 569.5,479.8 570.5,479.8 571.5,479.8 572.5,479.9 573.5,479.9 574.5,479.9 575.5,480.0 576.5,480.0 577.5,480.0 578.5,480.1 579.5,480.1 580.5,480.1 581.5,480.2 582.5,480.2 583.5,480.2 584.5,480.3 585.5,480.3 586.5,480.4 587.5,480.4 588.5,480.4 589.5,480.5 590.5,480.5 591.5,480.5 592.5,480.6 593.5,480.6 594.5,480.6 595.5,480.7 596.5,480.7 597.5,480.8 598.5,480.8 599.5,480.8 600.5,480.9 601.5,480.9 602.5,481.0 603.5,481.0 604.5,481.1 605.5,481.1 606.5,481.2 607.5,481.2 608.5,481.2 609.5,481.3 610.5,481.3 611.5,481.4 612.5,481.4 613.5,481.5 614.5,481.5 615.5,481.6 616.5,481.6 617.5,481.7 618.5,481.7 619.5,481.8 620.5,481.8 621.5,481.8 622.5,481.9 623.5,481.9 624.5,482.0 625.5,482.0 626.5,482.0 627.5,482.0 628.5,482.0 629.5,482.0 630.5,482.0 631.5,482.0 632.5,482.0 633.5,482.1 634.5,482.1 635.5,482.1 636.5,482.1 637.5,482.1 638.5,482.1 639.5,482.1 640.5,482.1 641.5,482.1 642.5,482.1 643.5,482.1 644.5,482.1 645.5,482.1 646.5,482.1 647.5,482.1 648.5,482.1 649.5,482.2 650.5,482.2 651.5,482.2 652.5,482.2 653.5,482.2 654.5,482.2 655.5,482.2 656.5,482.2 657.5,482.2 658.5,482.2 659.5,482.2 660.5,482.2 661.5,482.2 662.5,482.2 663.5,482.2 664.5,482.2 665.5,482.3 666.5,482.4 667.5,482.5 668.5,482.6 669.5,482.6 670.5,482.7 671.5,482.8 672.5,482.9 673.5,483.0 674.5,483.1 675.5,483.1 676.5,483.2 677.5,483.3 678.5,483.4 679.5,483.5 680.5,483.6 681.5,483.7 682.5,483.8 683.5,483.9 684.5,483.9 685.5,484.1 686.5,484.1 687.5,484.2 688.5,484.4 689.5,484.4 690.5,484.6 691.5,484.6 692.5,484.8 693.5,484.9 694.5,484.9 695.5,485.0 696.5,485.1 697.5,485.2 698.5,485.3 699.5,485.4 700.5,485.5 701.5,485.6 702.5,485.6 703.5,485.7 704.5,485.8 705.5,485.9 706.5,486.0 707.5,486.1 708.5,486.2 709.5,486.2 710.5,486.3 711.5,486.4 712.5,486.5 713.5,486.6 714.5,486.8 715.5,486.9 716.5,487.1 717.5,487.2 718.5,487.4 719.5,487.5 720.5,487.6 721.5,487.8 722.5,487.9 723.5,488.1 724.5,488.2 725.5,488.4 726.5,488.5 727.5,488.6 728.5,488.8 729.5,488.9 730.5,489.1 731.5,489.2 732.5,489.3 733.5,489.4 734.5,489.5 735.5,489.6 736.5,489.8 737.5,489.9 738.5,490.0 739.5,490.1 740.5,490.2 741.5,490.3 742.5,490.5 743.5,490.6 744.5,490.7 745.5,490.8 746.5,490.9 747.5,490.9 748.5,491.0 749.5,491.1 750.5,491.2 751.5,491.2 752.5,491.3 753.5,491.4 754.5,491.5 755.5,491.5 756.5,491.6 757.5,491.7 758.5,491.8 759.5,491.8 760.5,491.9 761.5,492.0 762.0,492.0" fill="none" stroke="#ff0000" stroke-width="2.4" />
<line x1="5" y1="517.5" x2="957" y2="517.5" stroke="#8f8f8f" stroke-width="1" stroke-dasharray="3,3"/>
<line x1="5" y1="558.5" x2="957" y2="558.5" stroke="#8f8f8f" stroke-width="1" stroke-dasharray="3,3"/>
<polyline points="5.5,558.0 6.5,558.1 7.5,558.1 8.5,558.2 9.5,558.3 10.5,558.4 11.5,558.4 12.5,558.5 13.5,558.9 14.5,559.3 15.5,559.7 16.5,560.1 17.5,560.5 18.5,560.9 19.5,561.3 20.5,561.6 21.5,561.7 22.5,561.8 23.5,561.9 24.5,562.1 25.5,562.2 26.5,562.3 27.5,562.4 28.5,562.6 29.5,562.7 30.5,562.8 31.5,562.9 32.5,563.0 33.5,563.0 34.5,563.1 35.5,563.2 36.5,563.3 37.5,563.4 38.5,563.4 39.5,563.5 40.5,563.6 41.5,563.7 42.5,563.8 43.5,563.7 44.5,563.7 45.5,563.7 46.5,563.7 47.5,563.6 48.5,563.6 49.5,563.6 50.5,563.6 51.5,563.6 52.5,563.5 53.5,563.5 54.5,563.5 55.5,563.4 56.5,563.3 57.5,563.2 58.5,563.1 59.5,562.9 60.5,562.8 61.5,562.7 62.5,562.6 63.5,562.4 64.5,562.3 65.5,562.3 66.5,562.4 67.5,562.4 68.5,562.5 69.5,562.6 70.5,562.7 71.5,562.7 72.5,562.8 73.5,562.9 74.5,563.0 75.5,563.0 76.5,563.1 77.5,563.2 78.5,563.4 79.5,563.5 80.5,563.5 81.5,563.6 82.5,563.8 83.5,563.9 84.5,564.0 85.5,564.0 86.5,564.1 87.5,564.2 88.5,564.4 89.5,564.5 90.5,564.7 91.5,564.8 92.5,565.0 93.5,565.1 94.5,565.2 95.5,565.4 96.5,565.5 97.5,565.6 98.5,565.8 99.5,565.9 100.5,566.0 101.5,566.0 102.5,566.0 103.5,566.1 104.5,566.1 105.5,566.1 106.5,566.1 107.5,566.1 108.5,566.2 109.5,566.2 110.5,566.2 111.5,566.2 112.5,566.2 113.5,566.2 114.5,566.2 115.5,566.2 116.5,566.2 117.5,566.1 118.5,566.1 119.5,566.1 120.5,566.1 121.5,566.1 122.5,566.0 123.5,566.0 124.5,566.0 125.5,565.9 126.5,565.6 127.5,565.4 128.5,565.2 129.5,565.0 130.5,564.7 131.5,564.5 132.5,564.2 133.5,563.9 134.5,563.5 135.5,563.0 136.5,562.6 137.5,562.2 138.5,561.9" fill="none" stroke="#ff0000" stroke-width="3.2" />
<polyline points="137.5,562.2 138.5,561.9 139.5,561.5 140.5,561.2 141.5,560.9 142.5,560.5 143.5,560.2 144.5,559.9 145.5,559.5 146.5,559.0 147.5,558.5 148.5,558.0 149.5,557.5 150.5,556.8 151.5,555.8 152.5,554.8 153.5,553.8 154.5,552.8 155.5,551.8 156.5,550.9 157.5,550.5 158.5,550.1 159.5,549.7 160.5,549.3 161.5,548.9 162.5,548.5 163.5,548.4 164.5,548.3 165.5,548.2 166.5,548.2 167.5,548.1 168.5,548.0 169.5,547.9 170.5,547.8 171.5,547.5 172.5,546.7 173.5,545.8 174.5,545.0 175.5,544.1 176.5,543.3 177.5,542.5 178.5,541.7 179.5,540.9 180.5,540.1 181.5,539.3 182.5,538.5 183.5,538.2 184.5,537.8 185.5,537.5 186.5,537.2 187.5,536.8 188.5,536.5 189.5,536.2 190.5,536.0 191.5,535.9 192.5,535.9 193.5,535.8 194.5,535.8 195.5,535.7 196.5,535.7 197.5,535.6 198.5,535.6 199.5,535.5 200.5,535.4 201.5,535.2 202.5,535.1 203.5,534.9 204.5,534.8 205.5,534.6 206.5,534.4 207.5,534.2 208.5,533.5 209.5,532.7 210.5,532.0 211.5,531.2 212.5,530.4 213.5,529.6 214.5,528.9 215.5,528.2 216.5,527.6 217.5,527.0 218.5,526.4 219.5,525.8 220.5,525.2 221.5,524.6 222.5,524.0 223.5,523.8 224.5,523.5 225.5,523.3 226.5,523.1 227.5,522.8 228.5,522.6 229.5,522.4 230.5,522.2 231.5,522.2 232.5,522.1 233.5,522.1 234.5,522.0 235.5,522.0 236.5,521.9 237.5,521.9 238.5,521.8 239.5,521.8 240.5,521.7 241.5,521.6 242.5,521.4 243.5,521.3 244.5,521.2 245.5,521.1 246.5,520.9 247.5,520.8 248.5,520.7 249.5,520.6 250.5,520.3 251.5,520.0 252.5,519.7 253.5,519.3 254.5,519.0 255.5,518.7 256.5,518.3 257.5,518.0 258.5,517.7 259.5,517.5 260.5,517.2 261.5,516.9 262.5,516.7 263.5,516.4 264.5,516.1 265.5,515.9 266.5,515.8 267.5,515.7 268.5,515.5 269.5,515.4 270.5,515.3 271.5,515.1 272.5,515.0 273.5,514.9 274.5,514.8 275.5,514.7 276.5,514.6 277.5,514.5 278.5,515.2 279.5,515.9 280.5,516.6 281.5,517.3 282.5,518.0 283.5,518.8 284.5,519.6 285.5,520.4 286.5,521.2 287.5,522.0 288.5,522.8 289.5,522.5 290.5,521.9 291.5,521.2 292.5,520.6 293.5,519.9 294.5,519.5 295.5,519.0 296.5,518.6 297.5,518.2 298.5,517.9 299.5,517.5 300.5,518.1" fill="none" stroke="#00ff00" stroke-width="3.2" />
<polyline points="300.5,518.1 301.5,519.8 302.5,521.4 303.5,523.1 304.5,525.2 305.5,527.4 306.5,529.7 307.5,531.9 308.5,534.2 309.5,535.4 310.5,536.3 311.5,537.2 312.5,538.1 313.5,539.0 314.5,539.4 315.5,539.5 316.5,539.7 317.5,539.9 318.5,540.0 319.5,540.2 320.5,540.4 321.5,540.7 322.5,541.6 323.5,542.4 324.5,543.3 325.5,544.1 326.5,545.0 327.5,545.8 328.5,546.7 329.5,547.5 330.5,548.4 331.5,549.1 332.5,549.5 333.5,549.9 334.5,550.3 335.5,550.7 336.5,551.0 337.5,551.0 338.5,551.0 339.5,551.0 340.5,551.0 341.5,551.0 342.5,551.0 343.5,551.0 344.5,551.0 345.5,550.9 346.5,550.8 347.5,550.6 348.5,550.4 349.5,550.2 350.5,550.1 351.5,549.9 352.5,549.8 353.5,550.0 354.5,550.2 355.5,550.5 356.5,550.7 357.5,550.9 358.5,551.1 359.5,551.4 360.5,551.6 361.5,551.9 362.5,552.1 363.5,552.4 364.5,552.6 365.5,552.9 366.5,553.1 367.5,553.4 368.5,553.6 369.5,553.9 370.5,554.1 371.5,554.3 372.5,554.5 373.5,554.7 374.5,554.9 375.5,555.1 376.5,555.3 377.5,555.5 378.5,555.7 379.5,555.9 380.5,556.0 381.5,556.0 382.5,556.1 383.5,556.1 384.5,556.1 385.5,556.1 386.5,556.2 387.5,556.2 388.5,556.2 389.5,556.2 390.5,556.2 391.5,556.0 392.5,555.9 393.5,555.7 394.5,555.6 395.5,555.4 396.5,555.3 397.5,555.1 398.5,555.0 399.5,554.8 400.5,554.6 401.5,554.3 402.5,553.9 403.5,553.6 404.5,553.3 405.5,553.0 406.5,552.6 407.5,552.3 408.5,552.0 409.5,551.7 410.5,551.4 411.5,551.2 412.5,551.1 413.5,550.9 414.5,550.8 415.5,550.6 416.5,550.4 417.5,550.2 418.5,550.2 419.5,550.2 420.5,550.2 421.5,550.2 422.5,550.2 423.5,550.2 424.5,550.2 425.5,550.2 426.5,550.2 427.5,550.2 428.5,550.2 429.5,550.2 430.5,550.2 431.5,550.2 432.5,550.2 433.5,550.5 434.5,550.7 435.5,550.9 436.5,551.1 437.5,551.4 438.5,551.6 439.5,551.8 440.5,552.0 441.5,552.3 442.5,552.5 443.5,552.7 444.5,552.9 445.5,553.0 446.5,553.2 447.5,553.4 448.5,553.5 449.5,553.7 450.5,553.9 451.5,554.1 452.5,554.2 453.5,554.4 454.5,554.5 455.5,554.7 456.5,554.8 457.5,555.0 458.5,555.1 459.5,555.2 460.5,555.4 461.5,555.5 462.5,555.6 463.5,555.8 464.5,555.9 465.5,556.2 466.5,556.5 467.5,556.8 468.5,557.2 469.5,557.5 470.5,557.8 471.5,558.2 472.5,558.5 473.5,558.7 474.5,558.9 475.5,559.1 476.5,559.3 477.5,559.5 478.5,559.7 479.5,559.9 480.5,560.1 481.5,560.3 482.5,560.5 483.5,560.7 484.5,561.0 485.5,561.2 486.5,561.4 487.5,561.7 488.5,561.9 489.5,562.1 490.5,562.3 491.5,562.3 492.5,562.3 493.5,562.3 494.5,562.4 495.5,562.4 496.5,562.4 497.5,562.4 498.5,562.5 499.5,562.5 500.5,562.5 501.5,562.5 502.5,562.5 503.5,562.4 504.5,562.4 505.5,562.4 506.5,562.4 507.5,562.4 508.5,562.3 509.5,562.3 510.5,562.3 511.5,562.3 512.5,562.2 513.5,562.1 514.5,561.9 515.5,561.8 516.5,561.6 517.5,561.4 518.5,561.2 519.5,561.1 520.5,561.1 521.5,561.2 522.5,561.4 523.5,561.5 524.5,561.7 525.5,561.8 526.5,562.0 527.5,562.1 528.5,562.3 529.5,562.4 530.5,562.5 531.5,562.6 532.5,562.8 533.5,562.9 534.5,563.0 535.5,563.0 536.5,563.1 537.5,563.2 538.5,563.4 539.5,563.5 540.5,563.5 541.5,563.6 542.5,563.7 543.5,563.8 544.5,563.9 545.5,563.9 546.5,563.9 547.5,563.6 548.5,563.4 549.5,563.1 550.5,562.8 551.5,562.5 552.5,562.2 553.5,561.2" fill="none" stroke="#ff0000" stroke-width="3.2" />
<polyline points="552.5,562.2 553.5,561.2 554.5,560.2 555.5,559.2 556.5,558.2 557.5,557.2 558.5,556.2 559.5,555.8 560.5,555.4 561.5,555.1 562.5,554.8 563.5,554.5 564.5,554.2 565.5,554.0 566.5,553.9 567.5,553.8 568.5,553.6 569.5,553.5 570.5,553.5 571.5,553.4 572.5,553.2 573.5,553.1 574.5,553.0 575.5,552.8 576.5,552.4 577.5,551.9 578.5,551.5 579.5,551.0 580.5,550.6 581.5,550.2 582.5,549.8 583.5,549.5 584.5,549.2 585.5,549.0 586.5,548.8 587.5,548.5 588.5,549.5 589.5,550.5 590.5,551.5 591.5,552.6 592.5,553.8" fill="none" stroke="#00ff00" stroke-width="3.2" />
<polyline points="592.5,553.8 593.5,555.1 594.5,556.3 595.5,557.6 596.5,558.5 597.5,558.6 598.5,558.7 599.5,558.8 600.5,558.8 601.5,558.9 602.5,559.0 603.5,558.8 604.5,558.5 605.5,558.2 606.5,558.0 607.5,557.8 608.5,557.8 609.5,557.8 610.5,557.8 611.5,557.8 612.5,557.8 613.5,557.8 614.5,557.8 615.5,557.8 616.5,557.8 617.5,557.8 618.5,557.8 619.5,557.8 620.5,557.8 621.5,557.8 622.5,557.8 623.5,557.8 624.5,557.8 625.5,557.7 626.5,557.5 627.5,557.4 628.5,557.3 629.5,557.1 630.5,557.0 631.5,556.9 632.5,556.8 633.5,556.8 634.5,556.8 635.5,556.8 636.5,556.8 637.5,556.8 638.5,556.8 639.5,556.8 640.5,556.8 641.5,556.8 642.5,556.8" fill="none" stroke="#ff0000" stroke-width="3.2" />
<polyline points="642.5,556.8 643.5,556.7 644.5,556.7 645.5,556.6 646.5,556.6 647.5,556.6 648.5,556.5 649.5,556.5 650.5,556.5 651.5,556.4 652.5,556.4 653.5,556.4 654.5,556.3 655.5,556.3 656.5,556.3 657.5,556.3" fill="none" stroke="#00ff00" stroke-width="3.2" />
<polyline points="656.5,556.3 657.5,556.3 658.5,556.5 659.5,556.6 660.5,556.8 661.5,557.0 662.5,557.1 663.5,557.3 664.5,557.4 665.5,557.6 666.5,558.0 667.5,558.2 668.5,558.5 669.5,558.9 670.5,559.1 671.5,559.5 672.5,559.8 673.5,560.1 674.5,560.5 675.5,561.0 676.5,561.4 677.5,561.8 678.5,562.1 679.5,562.5 680.5,562.8 681.5,562.9 682.5,563.0 683.5,563.2 684.5,563.3 685.5,563.4 686.5,563.5 687.5,563.6 688.5,563.8 689.5,563.9 690.5,564.0 691.5,564.1 692.5,564.2 693.5,564.4 694.5,564.5 695.5,564.7 696.5,564.8 697.5,565.0 698.5,565.1 699.5,565.2 700.5,565.4 701.5,565.5 702.5,565.6 703.5,565.8 704.5,565.9 705.5,566.1 706.5,566.2 707.5,566.4 708.5,566.5 709.5,566.6 710.5,566.8 711.5,566.9 712.5,567.0 713.5,567.2 714.5,567.3 715.5,567.5 716.5,567.6 717.5,567.8 718.5,567.8 719.5,567.8 720.5,567.9 721.5,567.9 722.5,567.9 723.5,568.0 724.5,568.0 725.5,568.0 726.5,568.0 727.5,568.1 728.5,568.1 729.5,568.1 730.5,568.2 731.5,568.2 732.5,568.2 733.5,568.1 734.5,568.0 735.5,568.0 736.5,567.9 737.5,567.8 738.5,567.6 739.5,567.5 740.5,567.5 741.5,567.4 742.5,567.2 743.5,567.1 744.5,567.0 745.5,567.0 746.5,566.9 747.5,566.9 748.5,566.8 749.5,566.8 750.5,566.7 751.5,566.7 752.5,566.6 753.5,566.6 754.5,566.5 755.5,566.4 756.5,566.3 757.5,566.1 758.5,566.0 759.5,565.9 760.5,565.7 761.5,565.6 762.0,565.5" fill="none" stroke="#ff0000" stroke-width="3.2" />
<polyline points="5.5,579.5 120.0,579.5 130.0,588.8 140.0,593.8 150.0,596.2 160.0,594.0 200.0,592.0 240.0,590.0 277.5,588.8 310.0,590.5 340.0,590.5 347.5,595.0 385.0,595.0 400.0,603.2 405.0,605.0 550.0,605.0 555.0,612.5 565.0,620.0 575.0,622.5 583.8,625.2 741.2,625.2 745.0,630.8 757.0,631.2" fill="none" stroke="#008000" stroke-width="1" stroke-dasharray="3,3"/>
<polyline points="5.5,586.0 25.0,591.2 40.0,594.5 70.0,595.0 82.5,600.0 97.5,602.5 120.0,603.2 150.0,602.0 185.0,601.2 195.0,598.8 255.0,598.2 308.8,596.2 325.0,601.2 337.5,607.5 350.0,606.2 367.5,612.5 382.5,615.0 400.0,610.0 415.0,607.5 430.0,608.0 450.0,610.0 462.5,611.2 475.0,615.0 487.5,620.0 500.0,623.8 515.0,626.2 525.0,630.0 537.5,635.5 550.0,635.5 560.0,631.2 575.0,630.0 585.0,627.0 595.0,632.5 605.0,638.8 615.0,642.5 640.0,643.8 660.0,645.0 675.0,648.8 700.0,650.5 720.0,653.8 740.0,656.2 757.0,657.0" fill="none" stroke="#a51c1c" stroke-width="1" stroke-dasharray="3,3"/>
<polyline points="5.5,588.0 6.5,588.5 7.5,588.9 8.5,589.4 9.5,589.9 10.5,590.4 11.5,590.8 12.5,591.3 13.5,591.8 14.5,592.3 15.5,592.6 16.5,592.8 17.5,593.0 18.5,593.2 19.5,593.4 20.5,593.6 21.5,593.8 22.5,594.0 23.5,594.2 24.5,594.4 25.5,594.5 26.5,594.6 27.5,594.8 28.5,594.9 29.5,595.0 30.5,595.0 31.5,595.1 32.5,595.2 33.5,595.4 34.5,595.5 35.5,595.6 36.5,595.9 37.5,596.1 38.5,596.4 39.5,596.6 40.5,596.9 41.5,597.1 42.5,597.4 43.5,597.6 44.5,597.9 45.5,598.0 46.5,598.0 47.5,598.0 48.5,598.0 49.5,598.0 50.5,598.0 51.5,598.0 52.5,598.0 53.5,597.7 54.5,597.4 55.5,597.1 56.5,596.8 57.5,596.5 58.5,596.2 59.5,595.9 60.5,595.9 61.5,596.2 62.5,596.5 63.5,596.8 64.5,597.1 65.5,597.4 66.5,597.7 67.5,598.0 68.5,598.6 69.5,599.1 70.5,599.7 71.5,600.3 72.5,600.9 73.5,601.5 74.5,602.0 75.5,602.6 76.5,603.2 77.5,603.8 78.5,604.0 79.5,604.1 80.5,604.4 81.5,604.5 82.5,604.8 83.5,605.0 84.5,605.1 85.5,605.4 86.5,605.5 87.5,605.8 88.5,606.0 89.5,606.1 90.5,606.3 91.5,606.3 92.5,606.3 93.5,606.4 94.5,606.4 95.5,606.4 96.5,606.5 97.5,606.5 98.5,606.5 99.5,606.6 100.5,606.6 101.5,606.6 102.5,606.7 103.5,606.7 104.5,606.7 105.5,606.7 106.5,606.7 107.5,606.7 108.5,606.6 109.5,606.6 110.5,606.6 111.5,606.5 112.5,606.5 113.5,606.5 114.5,606.4 115.5,606.4 116.5,606.4 117.5,606.3 118.5,606.3 119.5,606.3 120.5,606.1 121.5,605.7 122.5,605.3 123.5,604.9 124.5,604.6 125.5,604.2 126.5,603.8 127.5,603.4 128.5,603.1 129.5,602.7 130.5,602.4 131.5,602.2 132.5,602.0 133.5,601.8 134.5,601.6 135.5,601.4 136.5,601.2 137.5,601.0 138.5,600.8 139.5,600.6 140.5,600.4 141.5,600.2 142.5,600.1 143.5,599.9 144.5,599.7 145.5,599.5 146.5,599.4 147.5,599.2 148.5,599.0 149.5,598.8 150.5,598.5 151.5,598.0 152.5,597.5 153.5,597.0 154.5,596.5 155.5,596.2" fill="none" stroke="#dc143c" stroke-width="3.2" />
<polyline points="154.5,596.5 155.5,596.2 156.5,596.1 157.5,595.9 158.5,595.8 159.5,595.7 160.5,595.6 161.5,595.4 162.5,595.3 163.5,595.2 164.5,595.1 165.5,595.0 166.5,594.9 167.5,594.9 168.5,594.8 169.5,594.8 170.5,594.7 171.5,594.7 172.5,594.6 173.5,594.6 174.5,594.5 175.5,594.5 176.5,594.5 177.5,594.4 178.5,594.4 179.5,594.4 180.5,594.4 181.5,594.3 182.5,594.3 183.5,594.3 184.5,594.3 185.5,594.4 186.5,594.7 187.5,594.9 188.5,595.2 189.5,595.5 190.5,595.8 191.5,596.0 192.5,596.3 193.5,596.6 194.5,596.9 195.5,597.0 196.5,597.1 197.5,597.2 198.5,597.4 199.5,597.5 200.5,597.5 201.5,597.6 202.5,597.8 203.5,597.9 204.5,598.0 205.5,597.9 206.5,597.5 207.5,597.2 208.5,597.0 209.5,596.6 210.5,596.4 211.5,596.0 212.5,595.8 213.5,595.5 214.5,595.1 215.5,594.9 216.5,594.7 217.5,594.5 218.5,594.3 219.5,594.1 220.5,593.9 221.5,593.7 222.5,593.5 223.5,593.3 224.5,593.1 225.5,593.0 226.5,593.0 227.5,593.0 228.5,593.0 229.5,593.0 230.5,593.0 231.5,593.0 232.5,593.0 233.5,593.0 234.5,593.0 235.5,593.0 236.5,593.0 237.5,593.0 238.5,592.9 239.5,592.8 240.5,592.8 241.5,592.7 242.5,592.6 243.5,592.5 244.5,592.4 245.5,592.4 246.5,592.3 247.5,592.2 248.5,592.1 249.5,592.0 250.5,591.8 251.5,591.5 252.5,591.2 253.5,590.9 254.5,590.5 255.5,590.2 256.5,589.9 257.5,589.6 258.5,589.2 259.5,588.9 260.5,588.7 261.5,588.5 262.5,588.3 263.5,588.2 264.5,588.0 265.5,587.8 266.5,587.7 267.5,587.5 268.5,587.5 269.5,587.5 270.5,587.5 271.5,587.5 272.5,587.5 273.5,587.5 274.5,587.5 275.5,587.8 276.5,588.4 277.5,589.0 278.5,589.6 279.5,590.2 280.5,590.8 281.5,591.4 282.5,592.0 283.5,592.6 284.5,593.2 285.5,593.8 286.5,594.4 287.5,595.0 288.5,594.2 289.5,593.4 290.5,592.6 291.5,591.8 292.5,591.0 293.5,590.2 294.5,589.4 295.5,588.6 296.5,587.8 297.5,587.0 298.5,586.2 299.5,585.4 300.5,585.2 301.5,585.5 302.5,585.8 303.5,586.2 304.5,587.4 305.5,588.9 306.5,590.4 307.5,591.9" fill="none" stroke="#00ff7f" stroke-width="3.2" />
<polyline points="306.5,590.4 307.5,591.9 308.5,593.4 309.5,594.9 310.5,596.4 311.5,597.9 312.5,599.4 313.5,600.9 314.5,601.8 315.5,602.4 316.5,603.1 317.5,603.8 318.5,604.4 319.5,605.1 320.5,605.8 321.5,606.4 322.5,607.2 323.5,608.0 324.5,608.8 325.5,609.5 326.5,610.3 327.5,611.1 328.5,611.8 329.5,612.6 330.5,613.1 331.5,613.2 332.5,613.3 333.5,613.4 334.5,613.5 335.5,613.7 336.5,613.5 337.5,612.8 338.5,612.0 339.5,611.1 340.5,610.4 341.5,609.5 342.5,608.8 343.5,608.0 344.5,607.3 345.5,606.6 346.5,605.9 347.5,605.1 348.5,604.4 349.5,604.8 350.5,605.5 351.5,606.2 352.5,607.0 353.5,607.7 354.5,608.4 355.5,609.1 356.5,609.9 357.5,610.6 358.5,611.4 359.5,612.1 360.5,612.9 361.5,613.6 362.5,614.4 363.5,615.1 364.5,615.9 365.5,616.2 366.5,616.2 367.5,616.1 368.5,616.1 369.5,616.0 370.5,616.0 371.5,615.9 372.5,615.9 373.5,615.8 374.5,615.8 375.5,615.8 376.5,616.0 377.5,616.1 378.5,616.3 379.5,616.5 380.5,616.6 381.5,616.6 382.5,616.0 383.5,615.3 384.5,614.7 385.5,614.1 386.5,613.5 387.5,612.8 388.5,612.2 389.5,611.6 390.5,611.1 391.5,610.8 392.5,610.4 393.5,610.1 394.5,609.8 395.5,609.4 396.5,609.1 397.5,608.8 398.5,608.1 399.5,607.4 400.5,606.7 401.5,606.0 402.5,605.4 403.5,604.7 404.5,604.5 405.5,604.5 406.5,604.5 407.5,604.5 408.5,604.5 409.5,604.5 410.5,604.7 411.5,605.2 412.5,605.6 413.5,606.1 414.5,606.5 415.5,606.6 416.5,606.2 417.5,605.9 418.5,606.1 419.5,606.8 420.5,607.4 421.5,608.1 422.5,608.8 423.5,608.9 424.5,609.1 425.5,609.2 426.5,609.4 427.5,609.6 428.5,609.8 429.5,609.9 430.5,610.2 431.5,610.6 432.5,611.0 433.5,611.4 434.5,611.8 435.5,612.2 436.5,612.6 437.5,613.0 438.5,613.2 439.5,613.4 440.5,613.6 441.5,613.8 442.5,614.0 443.5,614.2 444.5,614.4 445.5,614.6 446.5,614.8 447.5,615.0 448.5,614.8 449.5,614.7 450.5,614.5 451.5,614.3 452.5,614.2 453.5,614.0 454.5,613.8 455.5,613.6 456.5,613.3 457.5,613.0 458.5,612.6 459.5,612.3 460.5,612.0 461.5,611.9 462.5,612.6 463.5,613.4 464.5,614.1 465.5,614.8 466.5,615.5 467.5,616.2 468.5,616.7 469.5,617.1 470.5,617.5 471.5,618.0 472.5,618.4 473.5,618.9 474.5,619.3 475.5,619.7 476.5,620.2 477.5,620.7 478.5,621.2 479.5,621.7 480.5,622.1 481.5,622.6 482.5,623.2 483.5,623.9 484.5,624.5 485.5,625.0 486.5,625.6 487.5,626.2 488.5,626.3 489.5,626.4 490.5,626.5 491.5,626.6 492.5,626.7 493.5,626.8 494.5,626.9 495.5,626.9 496.5,627.1 497.5,627.4 498.5,627.8 499.5,628.1 500.5,628.5 501.5,628.7 502.5,628.4 503.5,628.1 504.5,627.8 505.5,627.6 506.5,627.3 507.5,627.0 508.5,627.1 509.5,627.3 510.5,627.4 511.5,627.5 512.5,627.7 513.5,627.8 514.5,627.9 515.5,628.2 516.5,628.6 517.5,629.1 518.5,629.5 519.5,630.0 520.5,630.4 521.5,630.8 522.5,631.2 523.5,632.1 524.5,632.9 525.5,633.8 526.5,634.6 527.5,635.4 528.5,636.2 529.5,637.1 530.5,637.7 531.5,638.1 532.5,638.5 533.5,638.9 534.5,639.3 535.5,639.7 536.5,640.1 537.5,640.5 538.5,640.4 539.5,640.2 540.5,640.1 541.5,640.0 542.5,639.8 543.5,639.7 544.5,639.6 545.5,639.2 546.5,638.5 547.5,637.8 548.5,637.2 549.5,636.5 550.5,635.8 551.5,635.2 552.5,634.5 553.5,633.7 554.5,632.9 555.5,632.1 556.5,631.3 557.5,630.5 558.5,629.7 559.5,628.9 560.5,628.1 561.5,627.6 562.5,628.0 563.5,628.4 564.5,628.8 565.5,629.2 566.5,629.6 567.5,630.0 568.5,630.4 569.5,630.8 570.5,631.2 571.5,631.6 572.5,632.0 573.5,632.4 574.5,632.2 575.5,631.9 576.5,631.5 577.5,631.2 578.5,630.8 579.5,630.3 580.5,629.6 581.5,629.0 582.5,628.3 583.5,627.7 584.5,628.2 585.5,629.1 586.5,630.0 587.5,630.9 588.5,631.8 589.5,633.2 590.5,634.8 591.5,636.4 592.5,638.0 593.5,639.6 594.5,640.5 595.5,641.3 596.5,642.0 597.5,642.7 598.5,643.4 599.5,644.1 600.5,644.5 601.5,644.6 602.5,644.6 603.5,644.7 604.5,644.7 605.5,644.8 606.5,644.8 607.5,644.9 608.5,644.9 609.5,645.0 610.5,645.0 611.5,644.9 612.5,644.9 613.5,644.8 614.5,644.8 615.5,644.7 616.5,644.7 617.5,644.6 618.5,644.6 619.5,644.5 620.5,644.5 621.5,644.4 622.5,644.4 623.5,644.3 624.5,644.3 625.5,644.3 626.5,644.4 627.5,644.4 628.5,644.5 629.5,644.6 630.5,644.7 631.5,644.7 632.5,644.8 633.5,644.9 634.5,645.0 635.5,645.0 636.5,645.0 637.5,644.9 638.5,644.9 639.5,644.9 640.5,644.8 641.5,644.8 642.5,644.8 643.5,644.7 644.5,644.7 645.5,644.6 646.5,644.6 647.5,644.6 648.5,644.5 649.5,644.5 650.5,644.6 651.5,644.9 652.5,645.1 653.5,645.4 654.5,645.6 655.5,645.9 656.5,646.1 657.5,646.4 658.5,646.6 659.5,646.9 660.5,647.2 661.5,647.5 662.5,647.9 663.5,648.2 664.5,648.6 665.5,648.9 666.5,649.3 667.5,649.6 668.5,650.0 669.5,650.3 670.5,650.6 671.5,650.7 672.5,650.9 673.5,651.0 674.5,651.2 675.5,651.3 676.5,651.5 677.5,651.6 678.5,651.8 679.5,651.9 680.5,652.0 681.5,651.9 682.5,651.8 683.5,651.7 684.5,651.7 685.5,651.6 686.5,651.5 687.5,651.4 688.5,651.4 689.5,651.3 690.5,651.3 691.5,651.4 692.5,651.6 693.5,651.7 694.5,651.8 695.5,651.9 696.5,652.1 697.5,652.2 698.5,652.3 699.5,652.4 700.5,652.6 701.5,652.8 702.5,653.0 703.5,653.2 704.5,653.4 705.5,653.6 706.5,653.8 707.5,654.0 708.5,654.2 709.5,654.4 710.5,654.6 711.5,654.8 712.5,655.1 713.5,655.3 714.5,655.5 715.5,655.7 716.5,656.0 717.5,656.2 718.5,656.4 719.5,656.6 720.5,656.8 721.5,656.8 722.5,656.9 723.5,656.9 724.5,657.0 725.5,657.0 726.5,657.1 727.5,657.1 728.5,657.2 729.5,657.2 730.5,657.2 731.5,657.2 732.5,657.2 733.5,657.2 734.5,657.1 735.5,657.1 736.5,657.1 737.5,657.1 738.5,657.0 739.5,657.0 740.5,656.9 741.5,656.7 742.5,656.5 743.5,656.3 744.5,656.1 745.5,655.9 746.5,655.8 747.5,656.0 748.5,656.2 749.5,656.4 750.5,656.6 751.5,656.8 752.5,657.0 753.5,657.2 754.5,657.4 755.5,657.5 756.5,657.6 757.5,657.7 758.5,657.8 759.5,657.8 760.5,657.9 761.5,658.0 762.0,658.0" fill="none" stroke="#dc143c" stroke-width="3.2" />
<line x1="549.5" y1="102" x2="549.5" y2="662" stroke="#fff" stroke-width="1" stroke-dasharray="4,3"/>
<rect x="333" y="102" width="1" height="560" fill="#ff4500" />
<rect x="331" y="101" width="4" height="4" fill="#fff" stroke="#ff4500" stroke-width="1"/>
<rect x="331" y="333" width="4" height="4" fill="#fff" stroke="#ff4500" stroke-width="1"/>
<rect x="158.500" y="182.500" width="165" height="38" fill="none" stroke="#ff4500" stroke-width="1"/>
<rect x="324" y="201" width="9" height="1" fill="#ff4500" />
<text x="161.500" y="213.600" font-size="31.500" fill="#ff4500" textLength="160" lengthAdjust="spacingAndGlyphs">31729.0289</text>
<rect x="856" y="123" width="68" height="18" fill="#696969" />
<text x="866" y="137" font-size="13" fill="#00ff00">HL oma</text>
<text x="952" y="312" font-size="14" fill="#d3d3d3" text-anchor="end">00:02:08</text>
<text x="952" y="327" font-size="14" fill="#d3d3d3" text-anchor="end">31416.52</text>
<rect x="4" y="101" width="954" height="1" fill="#fff" />
<rect x="4" y="336" width="954" height="1" fill="#fff" />
<rect x="4" y="338" width="954" height="1" fill="#fff" />
<rect x="4" y="424" width="954" height="1" fill="#fff" />
<rect x="4" y="426" width="954" height="1" fill="#fff" />
<rect x="4" y="500" width="954" height="1" fill="#fff" />
<rect x="4" y="502" width="954" height="1" fill="#fff" />
<rect x="4" y="572" width="954" height="1" fill="#fff" />
<rect x="4" y="574" width="954" height="1" fill="#fff" />
<rect x="4" y="662" width="954" height="1" fill="#fff" />
<rect x="4" y="101" width="1" height="236" fill="#fff" />
<rect x="957" y="101" width="1" height="236" fill="#fff" />
<rect x="4" y="338" width="1" height="87" fill="#fff" />
<rect x="957" y="338" width="1" height="87" fill="#fff" />
<rect x="4" y="426" width="1" height="75" fill="#fff" />
<rect x="957" y="426" width="1" height="75" fill="#fff" />
<rect x="4" y="502" width="1" height="71" fill="#fff" />
<rect x="957" y="502" width="1" height="71" fill="#fff" />
<rect x="4" y="574" width="1" height="89" fill="#fff" />
<rect x="957" y="574" width="1" height="89" fill="#fff" />
<rect x="958" y="135" width="2" height="1" fill="#fff" />
<text x="963" y="139" font-size="10" fill="#fff" textLength="47.0" lengthAdjust="spacingAndGlyphs" >31905.3170</text>
<rect x="958" y="168" width="2" height="1" fill="#fff" />
<text x="963" y="172" font-size="10" fill="#fff" textLength="47.0" lengthAdjust="spacingAndGlyphs" >31817.7020</text>
<rect x="958" y="201" width="2" height="1" fill="#fff" />
<text x="963" y="205" font-size="10" fill="#fff" textLength="47.0" lengthAdjust="spacingAndGlyphs" >31730.0870</text>
<rect x="958" y="234" width="2" height="1" fill="#fff" />
<text x="963" y="238" font-size="10" fill="#fff" textLength="47.0" lengthAdjust="spacingAndGlyphs" >31639.8170</text>
<rect x="958" y="267" width="2" height="1" fill="#fff" />
<text x="963" y="271" font-size="10" fill="#fff" textLength="47.0" lengthAdjust="spacingAndGlyphs" >31552.2020</text>
<rect x="958" y="300" width="2" height="1" fill="#fff" />
<text x="963" y="304" font-size="10" fill="#fff" textLength="47.0" lengthAdjust="spacingAndGlyphs" >31464.5870</text>
<rect x="958" y="333" width="2" height="1" fill="#fff" />
<text x="963" y="337" font-size="10" fill="#fff" textLength="47.0" lengthAdjust="spacingAndGlyphs" >31376.9720</text>
<rect x="960" y="313" width="54" height="11" fill="#fff" />
<text x="963" y="322" font-size="10" fill="#000" textLength="47.0" lengthAdjust="spacingAndGlyphs" >31416.5195</text>
<text x="961" y="349" font-size="10" fill="#fff" textLength="28.1" lengthAdjust="spacingAndGlyphs" >0.6749</text>
<text x="961" y="363" font-size="10" fill="#fff" textLength="17.9" lengthAdjust="spacingAndGlyphs" >0.00</text>
<text x="961" y="421" font-size="10" fill="#fff" textLength="31.2" lengthAdjust="spacingAndGlyphs" >-2.2833</text>
<text x="961" y="437" font-size="10" fill="#fff" textLength="33.3" lengthAdjust="spacingAndGlyphs" >65.8967</text>
<text x="961" y="497" font-size="10" fill="#fff" textLength="33.3" lengthAdjust="spacingAndGlyphs" >35.5224</text>
<text x="961" y="512" font-size="10" fill="#fff" textLength="15.4" lengthAdjust="spacingAndGlyphs" >100</text>
<text x="961" y="521" font-size="10" fill="#fff" textLength="10.2" lengthAdjust="spacingAndGlyphs" >80</text>
<text x="961" y="562" font-size="10" fill="#fff" textLength="10.2" lengthAdjust="spacingAndGlyphs" >20</text>
<text x="961" y="569" font-size="10" fill="#fff" textLength="5.1" lengthAdjust="spacingAndGlyphs" >0</text>
<text x="961" y="585" font-size="10" fill="#fff" textLength="51.7" lengthAdjust="spacingAndGlyphs" >-10033.3655</text>
<text x="961" y="659" font-size="10" fill="#fff" textLength="51.7" lengthAdjust="spacingAndGlyphs" >-14373.6706</text>
<rect x="958" y="359" width="2" height="1" fill="#fff" />
<rect x="958" y="517" width="2" height="1" fill="#fff" />
<rect x="958" y="558" width="2" height="1" fill="#fff" />
<rect x="958" y="581" width="2" height="1" fill="#fff" />
<rect x="958" y="655" width="2" height="1" fill="#fff" />
<rect x="5" y="663" width="1" height="3" fill="#fff" />
<text x="4" y="675" font-size="10" fill="#fff" textLength="53.1" lengthAdjust="spacingAndGlyphs" >31 Aug 2022</text>
<rect x="69" y="663" width="1" height="3" fill="#fff" />
<text x="68" y="675" font-size="10" fill="#fff" textLength="55.7" lengthAdjust="spacingAndGlyphs" >31 Aug 14:00</text>
<rect x="133" y="663" width="1" height="3" fill="#fff" />
<text x="132" y="675" font-size="10" fill="#fff" textLength="55.7" lengthAdjust="spacingAndGlyphs" >31 Aug 15:20</text>
<rect x="197" y="663" width="1" height="3" fill="#fff" />
<text x="196" y="675" font-size="10" fill="#fff" textLength="55.7" lengthAdjust="spacingAndGlyphs" >31 Aug 16:40</text>
<rect x="261" y="663" width="1" height="3" fill="#fff" />
<text x="260" y="675" font-size="10" fill="#fff" textLength="29.4" lengthAdjust="spacingAndGlyphs" >31 Aug</text>
<rect x="325" y="663" width="1" height="3" fill="#fff" />
<text x="324" y="675" font-size="10" fill="#fff" textLength="55.7" lengthAdjust="spacingAndGlyphs" >31 Aug 19:20</text>
<rect x="389" y="663" width="1" height="3" fill="#fff" />
<text x="388" y="675" font-size="10" fill="#fff" textLength="55.7" lengthAdjust="spacingAndGlyphs" >31 Aug 20:40</text>
<rect x="453" y="663" width="1" height="3" fill="#fff" />
<text x="452" y="675" font-size="10" fill="#fff" textLength="55.7" lengthAdjust="spacingAndGlyphs" >31 Aug 22:00</text>
<rect x="517" y="663" width="1" height="3" fill="#fff" />
<text x="516" y="675" font-size="10" fill="#fff" textLength="55.7" lengthAdjust="spacingAndGlyphs" >31 Aug 23:20</text>
<rect x="581" y="663" width="1" height="3" fill="#fff" />
<text x="580" y="675" font-size="10" fill="#fff" textLength="51.0" lengthAdjust="spacingAndGlyphs" >1 Sep 00:40</text>
<rect x="645" y="663" width="1" height="3" fill="#fff" />
<text x="644" y="675" font-size="10" fill="#fff" textLength="51.0" lengthAdjust="spacingAndGlyphs" >1 Sep 03:00</text>
<rect x="709" y="663" width="1" height="3" fill="#fff" />
<text x="708" y="675" font-size="10" fill="#fff" textLength="51.0" lengthAdjust="spacingAndGlyphs" >1 Sep 04:20</text>
<rect x="294" y="666" width="78" height="11" fill="#ff4500" />
<text x="297" y="675" font-size="10" fill="#000" textLength="71.0" lengthAdjust="spacingAndGlyphs" >2022.08.31 19:30</text>
<text x="9" y="113" font-size="10" fill="#fff" textLength="245.0" lengthAdjust="spacingAndGlyphs" >US30,M5&#160;&#160;31415.5195 31422.0195 31412.5195 31416.5195</text>
<text x="9" y="351" font-size="10" fill="#fff" textLength="243.0" lengthAdjust="spacingAndGlyphs" >M5 VQ zero line Super smoother (55,0.75) -0.8032 -0.8032</text>
<text x="9" y="439" font-size="10" fill="#fff" textLength="251.0" lengthAdjust="spacingAndGlyphs" >dsl rsx (80, dsl period : 40) 56.4049 41.5155 38.6796 38.6796</text>
<text x="9" y="515" font-size="10" fill="#fff" textLength="257.0" lengthAdjust="spacingAndGlyphs" >Kps f1 Kase permission smoothed (9,5) 8.8825 8.8825 10.2169</text>
<text x="9" y="587" font-size="10" fill="#fff" textLength="361.5" lengthAdjust="spacingAndGlyphs" >M5dsl&#160;&#160;obv ma&#160;&#160;EMA&#160;&#160;-12837.9190 -14129.4659 -14176.3840 -14176.3840 -14129.4659</text>
<polygon points="761,101 770,101 765.5,106" fill="#778899" shape-rendering="auto"/>
<polygon points="5,656 5,662 11,662" fill="#778899" shape-rendering="auto"/>
</svg>
<div id="tabs" class="abs">
<div class="abs" style="left:1px;top:1px;width:1px;height:18px;background:#8a8a8a"></div>
<div class="abs tab" style="left:18px;transform-origin:0 0;transform:scaleX(0.943)">BANKNIFTY#,M15</div>
<div class="abs" style="left:126px;top:3px;width:1px;height:14px;background:#777"></div>
<div class="abs tab" style="left:138px;transform-origin:0 0;transform:scaleX(0.943)">BANKNIFTY#,M15</div>
<div class="abs" style="left:246px;top:-1px;width:69px;height:19px;background:#fff;border:1px solid #000;border-top:none;border-right-width:2px;border-bottom-width:2px"></div>
<div class="abs tab" style="left:257px;color:#000;transform-origin:0 0;transform:scaleX(0.9)">US30,M5</div>
<div class="abs" style="left:991.500px;top:5px;width:0;height:0;border:3.500px solid transparent;border-right:3.500px solid #999;border-left:none"></div>
<div class="abs" style="left:1011px;top:5px;width:0;height:0;border:3.500px solid transparent;border-left:3.500px solid #999;border-right:none"></div>
<div class="abs" style="left:1022px;top:0;width:2px;height:19px;background:#fff"></div>
</div>
<div class="abs" style="left:0;top:705px;width:1024px;height:1px;background:#fff"></div>
<div id="status" class="abs">
<div class="abs st" style="left:2px"><span style="display:inline-block;transform-origin:0 0;transform:scaleX(0.926)">For Help, press F1</span></div>
<div class="abs st" style="left:337px"><span style="display:inline-block;transform-origin:0 0;transform:scaleX(0.976)">Bank nifty2</span></div>
<div class="abs st" style="left:452.5px"><span style="display:inline-block;transform-origin:0 0;transform:scaleX(0.894)">2022.09.01 01:35</span></div>
<div class="abs st" style="left:555px;width:62px;overflow:hidden"><span style="display:inline-block;transform-origin:0 0;transform:scaleX(0.883)">O: 31550.520</span></div>
<div class="abs st" style="left:625.5px;width:62px;overflow:hidden"><span style="display:inline-block;transform-origin:0 0;transform:scaleX(0.883)">H: 31555.520</span></div>
<div class="abs st" style="left:696px;width:60px;overflow:hidden"><span style="display:inline-block;transform-origin:0 0;transform:scaleX(0.883)">L: 31550.520</span></div>
<div class="abs st" style="left:764.5px;width:62px;overflow:hidden"><span style="display:inline-block;transform-origin:0 0;transform:scaleX(0.883)">C: 31555.520</span></div>
<div class="abs st" style="left:834px"><span style="display:inline-block;transform-origin:0 0;transform:scaleX(0.87)">V: 43</span></div>
<div class="abs st" style="left:928px"><span style="display:inline-block;transform-origin:0 0;transform:scaleX(0.924)">6536/7 kb</span></div>
<div class="abs ssep" style="left:329px"></div>
<div class="abs ssep" style="left:446px"></div>
<div class="abs ssep" style="left:548px"></div>
<div class="abs ssep" style="left:619px"></div>
<div class="abs ssep" style="left:690px"></div>
<div class="abs ssep" style="left:758px"></div>
<div class="abs ssep" style="left:829px"></div>
<div class="abs ssep" style="left:895px"></div>
<div class="abs" style="left:900px;top:5px;width:2px;height:13px;background:linear-gradient(#5a8a1c 0,#5a8a1c 72%,#c0281c 72%)"></div><div class="abs" style="left:903px;top:5px;width:2px;height:13px;background:linear-gradient(#5a8a1c 0,#5a8a1c 64%,#c0281c 64%)"></div><div class="abs" style="left:906px;top:5px;width:2px;height:13px;background:linear-gradient(#5a8a1c 0,#5a8a1c 56%,#c0281c 56%)"></div><div class="abs" style="left:909px;top:5px;width:2px;height:13px;background:linear-gradient(#5a8a1c 0,#5a8a1c 48%,#c0281c 48%)"></div><div class="abs" style="left:912px;top:5px;width:2px;height:13px;background:linear-gradient(#5a8a1c 0,#5a8a1c 40%,#c0281c 40%)"></div><div class="abs" style="left:915px;top:5px;width:2px;height:13px;background:linear-gradient(#5a8a1c 0,#5a8a1c 32%,#c0281c 32%)"></div><div class="abs" style="left:918px;top:5px;width:2px;height:13px;background:linear-gradient(#5a8a1c 0,#5a8a1c 24%,#c0281c 24%)"></div><div class="abs" style="left:921px;top:5px;width:2px;height:13px;background:linear-gradient(#5a8a1c 0,#5a8a1c 16%,#c0281c 16%)"></div>
</div>
<div id="task" class="abs">
<svg class="abs" style="left:11px;top:4.5px" width="29" height="28" viewBox="0 0 29 28" ><path d="M0.500 4.800L11.500 3.200v9.800H0.500zM12.800 3L27.500 0.800V13H12.800zM0.500 14.300h11v9.700L0.500 22.400zM12.800 14.300H27.500v12.300L12.800 24.200z" fill="#fff"/></svg><svg class="abs" style="left:65px;top:3px" width="33" height="33" viewBox="0 0 33 33" ><rect x="1" y="1" width="14" height="27" rx="1" fill="#1e7fd8" stroke="#fff" stroke-width="1.3"/><path d="M1.500 9.500h13" stroke="#bfe0fa" stroke-width="1.2"/><rect x="6.500" y="17.500" width="25" height="13.500" rx="2" fill="#6f879c" stroke="#fff" stroke-width="1.3"/><path d="M13.500 17.500v-2.500h10v2.500" fill="none" stroke="#fff" stroke-width="1.300"/><path d="M10 23h18" stroke="#fff" stroke-width="1.200"/><rect x="17" y="21.500" width="4" height="3" fill="#fff"/></svg><svg class="abs" style="left:129px;top:8px" width="29" height="24" viewBox="0 0 29 24" ><defs><linearGradient id="psg" x1="0" y1="0" x2="0.600" y2="1"><stop offset="0" stop-color="#2a62a8"/><stop offset="0.450" stop-color="#4a8fd8"/><stop offset="0.550" stop-color="#1f5fb8"/><stop offset="1" stop-color="#2f7ad0"/></linearGradient></defs><path d="M6 2h21l-4.500 20.500h-21z" fill="url(#psg)" stroke="#8fc0ea" stroke-width="1.300" stroke-linejoin="round"/><path d="M9.500 6.500l7 5-9 6" fill="none" stroke="#fff" stroke-width="2.300"/><path d="M14.500 18h6" stroke="#e8f2fb" stroke-width="2"/></svg><svg class="abs" style="left:189px;top:5px" width="33" height="31" viewBox="0 0 33 31" ><path d="M1.500 5a2 2 0 0 1 2-2h11l1.500 2.500h14.500v21.500h-29z" fill="#f1d27c" stroke="#c9a53f"/><rect x="4" y="3.500" width="10" height="3" fill="#fff"/><rect x="12" y="5.500" width="10" height="3" fill="#fff"/><rect x="19" y="7.500" width="9" height="3" fill="#fff"/><rect x="4" y="3.500" width="3" height="2" fill="#22b322"/><rect x="12" y="5.500" width="3" height="2" fill="#d8281c"/><rect x="19" y="7.500" width="3" height="2" fill="#1c8ae0"/><path d="M2.500 10.500h15l1.500-2h11.500v18.500h-28z" fill="#fbe9a8" stroke="#e3c465" stroke-width="0.800"/><path d="M6 29.500v-9.500a2 2 0 0 1 2-2h16.500a2 2 0 0 1 2 2v9.500h-5.500v-6.500h-9.500v6.500z" fill="#9fd0f0" stroke="#4e9fd8" stroke-width="1"/><path d="M7 21.500h18" stroke="#e8f6ff" stroke-width="1.500"/></svg><div class="abs" style="left:237px;top:0;width:61px;height:39px;background:#7ed3ef;border-left:1px solid #3f7486;border-right:1px solid #3f7486"></div><svg class="abs" style="left:251px;top:3.5px" width="32" height="32" viewBox="0 0 32 32" ><defs><clipPath id="cc"><circle cx="16" cy="16" r="15"/></clipPath></defs><g clip-path="url(#cc)"><rect width="32" height="32" fill="#e0443a"/><polygon points="16,9 40,9 40,45 7.060,45.500 22.060,19.500 16,16" fill="#fcc934"/><polygon points="22.060,19.500 7.060,45.500 -10,45 -10,-6.500 -5.060,-6.500 9.940,19.500 16,16" fill="#1ea362"/></g><circle cx="16" cy="16" r="7.200" fill="#fff"/><circle cx="16" cy="16" r="5.700" fill="#3b7ded"/></svg><div class="abs" style="left:299px;top:0;width:60px;height:39px;border:1px solid #3f6a78;background:#f2b690"></div><div class="abs" style="left:300px;top:1px;width:58px;height:37px;border:1px solid #f4a878;background:radial-gradient(ellipse 70% 45% at 50% 105%,#fde3d0 0,rgba(253,227,208,0) 100%),linear-gradient(#a3c9d6 0,#c9c4bc 14%,#e9b796 32%,#f1b189 55%,#f4bc99 80%,#f8cdb2 100%)"></div><svg class="abs" style="left:312px;top:5px" width="34" height="30" viewBox="0 0 34 30" ><text x="17" y="24" font-family="Liberation Serif, serif" font-style="italic" font-weight="bold" font-size="29" text-anchor="middle" fill="#111">S</text><path d="M1 21C8 12 22 7 31 9.500C33.500 10.300 33 12.500 30 14.500C31 12.500 29.500 11.500 27 11.500C19 11.500 9 15.500 1 21Z" fill="#f57a0c"/></svg><div class="abs" style="left:844px;top:16px;width:0;height:0;border:4px solid transparent;border-bottom:5px solid #111;border-top:none"></div><svg class="abs" style="left:865px;top:11px" width="18" height="18" viewBox="0 0 18 18" ><path d="M2.500 1v16" stroke="#444" stroke-width="2.600"/><path d="M2.500 1.500v15" stroke="#fff" stroke-width="1.300"/><path d="M3.500 2.500q4-2 9 0v7q-5-2-9 0z" fill="#fff" stroke="#444" stroke-width="0.800"/><circle cx="12" cy="12" r="4.500" fill="#d8281c"/><path d="M10 10l4 4M14 10l-4 4" stroke="#fff" stroke-width="1.300"/></svg><svg class="abs" style="left:889px;top:11px" width="18" height="18" viewBox="0 0 18 18" ><rect x="5.500" y="4.500" width="10" height="8" fill="#fff" stroke="#444" stroke-width="1"/><rect x="7" y="6" width="7" height="5" fill="#66caea"/><path d="M7.500 15.500h6M10.500 13v2.500" stroke="#444" stroke-width="2.400"/><path d="M7.500 15.500h6M10.500 13v2.500" stroke="#fff" stroke-width="1.200"/><rect x="1.500" y="2.500" width="4" height="10" rx="1" fill="#fff" stroke="#444" stroke-width="1"/><circle cx="3.500" cy="5" r="0.900" fill="#444"/></svg><svg class="abs" style="left:913px;top:11px" width="18" height="18" viewBox="0 0 18 18" ><path d="M1.500 6.500h3l4-3.500v12l-4-3.500h-3z" fill="#fff" stroke="#444" stroke-width="0.900"/><path d="M11 6q2 3 0 6M13.500 4q3.500 5 0 10" fill="none" stroke="#444" stroke-width="2"/><path d="M11 6q2 3 0 6M13.500 4q3.500 5 0 10" fill="none" stroke="#fff" stroke-width="1"/></svg>
<div class="abs" style="left:0;top:0;width:1px;height:40px;background:#555"></div>
<div class="abs" style="left:0;top:38px;width:1024px;height:1px;background:#4f6a74"></div>
<div class="abs tray" style="left:946px;top:4px;width:60px;transform:scaleX(0.93)">05:57</div>
<div class="abs tray" style="left:946px;top:21px;width:60px;transform:scaleX(0.94)">01-09-2022</div>
<div class="abs" style="left:1020px;top:0;width:1px;height:40px;background:#3f7486"></div>
</div>
</body></html>
